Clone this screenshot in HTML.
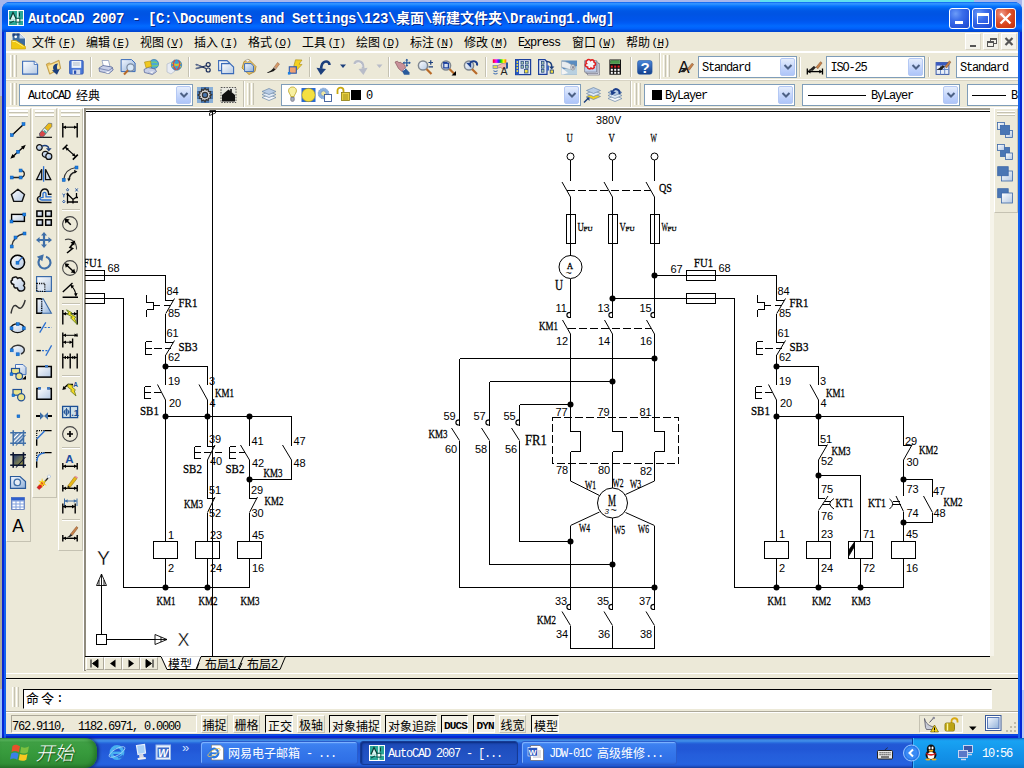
<!DOCTYPE html><html><head><meta charset="utf-8"><title>AutoCAD 2007 - Drawing1.dwg</title><style>
html,body{margin:0;padding:0}
body{width:1024px;height:768px;overflow:hidden;position:relative;background:#a7b6ec;font-family:"Liberation Mono","Noto Sans CJK SC",monospace;font-size:12px;color:#000}
div,svg{position:absolute;box-sizing:border-box}
.t{white-space:pre}
.m .c+.l{margin-left:1.5px;font-size:11px;letter-spacing:-.6px}
.l{letter-spacing:-1.2px}
.c+.l{position:relative;top:-1.5px}
.l:has(+.c){position:relative;top:-1.5px}
.lt{letter-spacing:-.4px}
.du{letter-spacing:-.85px;font-weight:bold}
.c{font-family:"Noto Sans CJK SC","WenQuanYi Zen Hei",sans-serif}
svg text.s{font-family:"Liberation Serif",serif;stroke:#000;stroke-width:.3px}
svg text.n{font-family:"Liberation Sans",sans-serif}
.cb{background:#fff;border:1px solid #7f9db9}
.dd{background:linear-gradient(#e6eefc,#c1d3fb 60%,#aec5f8);border:1px solid #b4c8f4;border-radius:2px}
.grip{border-left:1px solid #fff;border-right:1px solid #c5c2b2;width:3px;background:#ece9d8;box-shadow:1px 0 0 #ece9d8}
.sb{border:1px solid;border-color:#404040 #fff #fff #404040}
</style></head><body><div style="left:760px;top:0px;width:214px;height:2px;background:#5fe0f0"></div><div style="left:0px;top:690px;width:2px;height:48px;background:#9cc0f4"></div><div style="left:0px;top:96px;width:2px;height:593px;background:#aca899"></div><div style="left:1022px;top:0px;width:2px;height:690px;background:#e4e6f6"></div><div style="left:1022px;top:690px;width:2px;height:48px;background:#b4c8f8"></div><div style="left:2px;top:2px;width:1020px;height:736px;background:#0a49e0;border-radius:8px 8px 0 0"></div><div style="left:2px;top:736px;width:1020px;height:2px;background:#0526d6"></div><div style="left:2px;top:2px;width:1020px;height:30px;background:linear-gradient(#0058ee 0%,#3593ff 4%,#288eff 8%,#127dff 12%,#036ffc 16%,#0262ee 22%,#0057e5 30%,#0054e3 40%,#0055eb 60%,#005bf5 70%,#026afe 80%,#0061fc 88%,#0055ea 93%,#0048d5 96%,#0144d0 100%);border-radius:8px 8px 0 0"></div><div style="left:2px;top:32px;width:2px;height:706px;background:#0526d6"></div><div style="left:4px;top:32px;width:2px;height:706px;background:#1462ee"></div><div style="left:1018px;top:32px;width:2px;height:706px;background:#1462ee"></div><div style="left:1020px;top:32px;width:2px;height:706px;background:#0526d6"></div><div style="left:6px;top:32px;width:1012px;height:702px;background:#ece9d8"></div><div class="t" style="left:28px;top:10px;font-size:14px;line-height:14px;font-weight:bold;color:#fff;text-shadow:1px 1px 0 #0a2a8a"><span class="lt">AutoCAD 2007 - [C:\Documents and Settings\123\</span><span class="c">桌面</span><span class="lt">\</span><span class="c">新建文件夹</span><span class="lt">\Drawing1.dwg]</span></div><div style="left:949px;top:8px;width:21px;height:21px;background:radial-gradient(circle at 30% 25%,#6c9cf8 0%,#3c6eea 35%,#2a5ae0 65%,#1c46c8 100%);border:1px solid #fff;border-radius:3px"></div><div style="left:955px;top:21px;width:8px;height:3px;background:#fff"></div><div style="left:972px;top:8px;width:21px;height:21px;background:radial-gradient(circle at 30% 25%,#6c9cf8 0%,#3c6eea 35%,#2a5ae0 65%,#1c46c8 100%);border:1px solid #fff;border-radius:3px"></div><div style="left:977px;top:13px;width:12px;height:11px;border:1px solid #fff;border-top:3px solid #fff"></div><div style="left:995px;top:8px;width:21px;height:21px;background:radial-gradient(circle at 30% 25%,#f0a090 0%,#e06040 30%,#d8441c 60%,#c03010 100%);border:1px solid #fff;border-radius:3px"></div><svg style="left:995px;top:8px" width="21" height="21" viewBox="0 0 21 21" ><path d="M5.5 5.5L15.5 15.5M15.5 5.5L5.5 15.5" stroke="#fff" stroke-width="2.4" stroke-linecap="butt"/></svg><div style="left:6px;top:51px;width:1012px;height:2px;background:#fff"></div><div class="t m" style="left:32px;top:36px;font-size:12px;line-height:12px;"><span class="c">文件</span><span class="l">(F)</span></div><div style="left:63px;top:47px;width:6px;height:1px;background:#000"></div><div class="t m" style="left:86px;top:36px;font-size:12px;line-height:12px;"><span class="c">编辑</span><span class="l">(E)</span></div><div style="left:117px;top:47px;width:6px;height:1px;background:#000"></div><div class="t m" style="left:140px;top:36px;font-size:12px;line-height:12px;"><span class="c">视图</span><span class="l">(V)</span></div><div style="left:171px;top:47px;width:6px;height:1px;background:#000"></div><div class="t m" style="left:194px;top:36px;font-size:12px;line-height:12px;"><span class="c">插入</span><span class="l">(I)</span></div><div style="left:225px;top:47px;width:6px;height:1px;background:#000"></div><div class="t m" style="left:248px;top:36px;font-size:12px;line-height:12px;"><span class="c">格式</span><span class="l">(O)</span></div><div style="left:279px;top:47px;width:6px;height:1px;background:#000"></div><div class="t m" style="left:302px;top:36px;font-size:12px;line-height:12px;"><span class="c">工具</span><span class="l">(T)</span></div><div style="left:333px;top:47px;width:6px;height:1px;background:#000"></div><div class="t m" style="left:356px;top:36px;font-size:12px;line-height:12px;"><span class="c">绘图</span><span class="l">(D)</span></div><div style="left:387px;top:47px;width:6px;height:1px;background:#000"></div><div class="t m" style="left:410px;top:36px;font-size:12px;line-height:12px;"><span class="c">标注</span><span class="l">(N)</span></div><div style="left:441px;top:47px;width:6px;height:1px;background:#000"></div><div class="t m" style="left:464px;top:36px;font-size:12px;line-height:12px;"><span class="c">修改</span><span class="l">(M)</span></div><div style="left:495px;top:47px;width:6px;height:1px;background:#000"></div><div class="t m" style="left:518px;top:37px;font-size:12px;line-height:12px;"><span class="l">Express</span></div><div class="t m" style="left:572px;top:36px;font-size:12px;line-height:12px;"><span class="c">窗口</span><span class="l">(W)</span></div><div style="left:603px;top:47px;width:6px;height:1px;background:#000"></div><div class="t m" style="left:626px;top:36px;font-size:12px;line-height:12px;"><span class="c">帮助</span><span class="l">(H)</span></div><div style="left:657px;top:47px;width:6px;height:1px;background:#000"></div><div style="left:524px;top:47px;width:6px;height:1px;background:#000"></div><div style="left:965px;top:33px;width:16px;height:17px;background:#f3f2ea;border:1px solid;border-color:#fff #d8d4c4 #d8d4c4 #fff"></div><div style="left:983px;top:33px;width:16px;height:17px;background:#f3f2ea;border:1px solid;border-color:#fff #d8d4c4 #d8d4c4 #fff"></div><div style="left:1001px;top:33px;width:16px;height:17px;background:#f3f2ea;border:1px solid;border-color:#fff #d8d4c4 #d8d4c4 #fff"></div><div style="left:970px;top:45px;width:6px;height:2px;background:#555"></div><div style="left:990px;top:38px;width:7px;height:6px;border:1px solid #555;border-top-width:2px"></div><div style="left:987px;top:41px;width:7px;height:6px;border:1px solid #555;border-top-width:2px;background:#f3f2ea"></div><svg style="left:1001px;top:33px" width="16" height="17" viewBox="0 0 16 17" ><path d="M4.5 5L11.5 12M11.5 5L4.5 12" stroke="#555" stroke-width="2.2"/></svg><div style="left:6px;top:79px;width:1012px;height:1px;background:#fff"></div><div style="left:6px;top:80px;width:1012px;height:1px;background:#d8d4c4"></div><div style="left:6px;top:107px;width:1012px;height:1px;background:#fff"></div><div class="grip" style="left:10px;top:55px;width:3px;height:22px;"></div><div class="grip" style="left:14px;top:55px;width:3px;height:22px;"></div><div class="grip" style="left:663px;top:55px;width:3px;height:22px;"></div><div class="grip" style="left:667px;top:55px;width:3px;height:22px;"></div><div class="grip" style="left:10px;top:83px;width:3px;height:22px;"></div><div class="grip" style="left:14px;top:83px;width:3px;height:22px;"></div><div class="grip" style="left:247px;top:83px;width:3px;height:22px;"></div><div class="grip" style="left:251px;top:83px;width:3px;height:22px;"></div><div class="grip" style="left:634px;top:83px;width:3px;height:22px;"></div><div class="grip" style="left:638px;top:83px;width:3px;height:22px;"></div><div style="left:90px;top:57px;width:1px;height:20px;background:#c5c2b2"></div><div style="left:91px;top:57px;width:1px;height:20px;background:#fff"></div><div style="left:188px;top:57px;width:1px;height:20px;background:#c5c2b2"></div><div style="left:189px;top:57px;width:1px;height:20px;background:#fff"></div><div style="left:309px;top:57px;width:1px;height:20px;background:#c5c2b2"></div><div style="left:310px;top:57px;width:1px;height:20px;background:#fff"></div><div style="left:388px;top:57px;width:1px;height:20px;background:#c5c2b2"></div><div style="left:389px;top:57px;width:1px;height:20px;background:#fff"></div><div style="left:485px;top:57px;width:1px;height:20px;background:#c5c2b2"></div><div style="left:486px;top:57px;width:1px;height:20px;background:#fff"></div><div style="left:630px;top:57px;width:1px;height:20px;background:#c5c2b2"></div><div style="left:631px;top:57px;width:1px;height:20px;background:#fff"></div><div style="left:659px;top:53px;width:1px;height:26px;background:#c5c2b2"></div><div style="left:660px;top:53px;width:1px;height:26px;background:#fff"></div><div style="left:243px;top:81px;width:1px;height:26px;background:#c5c2b2"></div><div style="left:244px;top:81px;width:1px;height:26px;background:#fff"></div><div style="left:630px;top:81px;width:1px;height:26px;background:#c5c2b2"></div><div style="left:631px;top:81px;width:1px;height:26px;background:#fff"></div><div class="cb" style="left:698px;top:56px;width:99px;height:22px;"></div><div class="dd" style="left:780px;top:58px;width:15px;height:18px;"></div><svg style="left:779.5px;top:58px" width="16" height="18" viewBox="0 0 16 18" ><path d="M4.5 7 l3.5 3.5 l3.5 -3.5" fill="none" stroke="#4d6185" stroke-width="2"/></svg><div class="t" style="left:702px;top:62px;font-size:12px;line-height:12px;"><span class="l">Standard</span></div><div class="cb" style="left:826px;top:56px;width:99px;height:22px;"></div><div class="dd" style="left:908px;top:58px;width:15px;height:18px;"></div><svg style="left:907.5px;top:58px" width="16" height="18" viewBox="0 0 16 18" ><path d="M4.5 7 l3.5 3.5 l3.5 -3.5" fill="none" stroke="#4d6185" stroke-width="2"/></svg><div class="t" style="left:830.5px;top:62px;font-size:12px;line-height:12px;"><span class="l">ISO-25</span></div><div style="left:799px;top:57px;width:1px;height:20px;background:#c5c2b2"></div><div style="left:800px;top:57px;width:1px;height:20px;background:#fff"></div><div style="left:928px;top:57px;width:1px;height:20px;background:#c5c2b2"></div><div style="left:929px;top:57px;width:1px;height:20px;background:#fff"></div><div class="cb" style="left:956px;top:56px;width:62px;height:22px;border-right:0"></div><div class="t" style="left:960px;top:62px;font-size:12px;line-height:12px;"><span class="l">Standard</span></div><div class="cb" style="left:19px;top:84px;width:174px;height:22px;"></div><div class="dd" style="left:176px;top:86px;width:15px;height:18px;"></div><svg style="left:175.5px;top:86px" width="16" height="18" viewBox="0 0 16 18" ><path d="M4.5 7 l3.5 3.5 l3.5 -3.5" fill="none" stroke="#4d6185" stroke-width="2"/></svg><div class="t" style="left:28px;top:89px;font-size:12px;line-height:12px;"><span class="l">AutoCAD </span><span class="c">经典</span></div><div class="cb" style="left:281px;top:84px;width:300px;height:22px;"></div><div class="dd" style="left:564px;top:86px;width:15px;height:18px;"></div><svg style="left:563.5px;top:86px" width="16" height="18" viewBox="0 0 16 18" ><path d="M4.5 7 l3.5 3.5 l3.5 -3.5" fill="none" stroke="#4d6185" stroke-width="2"/></svg><div style="left:351px;top:90px;width:10px;height:10px;background:#000"></div><div class="t" style="left:366px;top:90px;font-size:12px;line-height:12px;"><span class="l">0</span></div><div class="cb" style="left:644px;top:84px;width:151px;height:22px;"></div><div class="dd" style="left:778px;top:86px;width:15px;height:18px;"></div><svg style="left:777.5px;top:86px" width="16" height="18" viewBox="0 0 16 18" ><path d="M4.5 7 l3.5 3.5 l3.5 -3.5" fill="none" stroke="#4d6185" stroke-width="2"/></svg><div style="left:652px;top:90px;width:10px;height:10px;background:#000"></div><div class="t" style="left:665px;top:90px;font-size:12px;line-height:12px;"><span class="l">ByLayer</span></div><div class="cb" style="left:802px;top:84px;width:158px;height:22px;"></div><div class="dd" style="left:943px;top:86px;width:15px;height:18px;"></div><svg style="left:942.5px;top:86px" width="16" height="18" viewBox="0 0 16 18" ><path d="M4.5 7 l3.5 3.5 l3.5 -3.5" fill="none" stroke="#4d6185" stroke-width="2"/></svg><div style="left:808px;top:95px;width:58px;height:1px;background:#000"></div><div class="t" style="left:871px;top:90px;font-size:12px;line-height:12px;"><span class="l">ByLayer</span></div><div class="cb" style="left:967px;top:84px;width:51px;height:22px;border-right:0"></div><div style="left:972px;top:95px;width:34px;height:1px;background:#000"></div><div class="t" style="left:1011px;top:90px;font-size:12px;line-height:12px;"><span class="l">B</span></div><div style="left:6px;top:108px;width:25px;height:434px;border:1px solid;border-color:#fff #c5c2b2 #c5c2b2 #fff"></div><div style="left:9px;top:110px;width:19px;height:3px;border-top:2px solid #fff;border-bottom:1px solid #c5c2b2"></div><div style="left:9px;top:114px;width:19px;height:3px;border-top:2px solid #fff;border-bottom:1px solid #c5c2b2"></div><div style="left:32px;top:108px;width:25px;height:390px;border:1px solid;border-color:#fff #c5c2b2 #c5c2b2 #fff"></div><div style="left:35px;top:110px;width:19px;height:3px;border-top:2px solid #fff;border-bottom:1px solid #c5c2b2"></div><div style="left:35px;top:114px;width:19px;height:3px;border-top:2px solid #fff;border-bottom:1px solid #c5c2b2"></div><div style="left:58px;top:108px;width:25px;height:443px;border:1px solid;border-color:#fff #c5c2b2 #c5c2b2 #fff"></div><div style="left:61px;top:110px;width:19px;height:3px;border-top:2px solid #fff;border-bottom:1px solid #c5c2b2"></div><div style="left:61px;top:114px;width:19px;height:3px;border-top:2px solid #fff;border-bottom:1px solid #c5c2b2"></div><div style="left:62px;top:209px;width:18px;height:2px;border-top:1px solid #c5c2b2;border-bottom:1px solid #fff"></div><div style="left:62px;top:303px;width:18px;height:2px;border-top:1px solid #c5c2b2;border-bottom:1px solid #fff"></div><div style="left:62px;top:375px;width:18px;height:2px;border-top:1px solid #c5c2b2;border-bottom:1px solid #fff"></div><div style="left:62px;top:447px;width:18px;height:2px;border-top:1px solid #c5c2b2;border-bottom:1px solid #fff"></div><div style="left:62px;top:519px;width:18px;height:2px;border-top:1px solid #c5c2b2;border-bottom:1px solid #fff"></div><div style="left:990px;top:108px;width:4px;height:548px;background:#f6f4ea"></div><div style="left:994px;top:108px;width:24px;height:105px;border:1px solid;border-color:#fff #c5c2b2 #c5c2b2 #fff"></div><div style="left:997px;top:111px;width:18px;height:2px;border-top:1px solid #fff;border-bottom:1px solid #c5c2b2"></div><div style="left:997px;top:114px;width:18px;height:2px;border-top:1px solid #fff;border-bottom:1px solid #c5c2b2"></div><div style="left:83px;top:108px;width:907px;height:2px;background:#a19d8f"></div><div style="left:83px;top:108px;width:1px;height:563px;background:#fff"></div><div style="left:84px;top:108px;width:2px;height:563px;background:#8f8b7e"></div><div style="left:86px;top:110px;width:904px;height:546px;background:#fff"></div><div style="left:86px;top:111px;width:904px;height:1px;background:#000"></div><svg style="left:85px;top:110px" width="905" height="546" viewBox="85 110 905 546" ><path d="M570.5 160L570.5 181M612.5 160L612.5 181M654.5 160L654.5 181M570.5 197L570.5 255.5M570.5 278.5L570.5 318M612.5 197L612.5 318M654.5 197L654.5 318M570.5 334L570.5 404.5M612.5 334L612.5 404.5M654.5 334L654.5 404.5M570.5 404.5L570.5 431.5M570.5 431.5L580.5 431.5M580.5 431.5L580.5 451.5M580.5 451.5L570.5 451.5M570.5 451.5L570.5 463M612.5 404.5L612.5 431.5M612.5 431.5L622.5 431.5M622.5 431.5L622.5 451.5M622.5 451.5L612.5 451.5M612.5 451.5L612.5 463M654.5 404.5L654.5 431.5M654.5 431.5L664.5 431.5M664.5 431.5L664.5 451.5M664.5 451.5L654.5 451.5M654.5 451.5L654.5 463M570.5 463L570.5 481M612.5 463L612.5 488M654.5 463L654.5 481M570.5 525.5L570.5 610M612.5 518L612.5 610M654.5 525.5L654.5 610M570.5 625.5L570.5 648.5M612.5 625.5L612.5 648.5M654.5 625.5L654.5 648.5M570.5 648.5L654.5 648.5M459.5 358.5L459.5 425.5M459.5 440.5L459.5 587.5M489.5 381.5L489.5 425.5M489.5 440.5L489.5 564.5M519.5 404.5L519.5 425.5M519.5 440.5L519.5 541.5M459.5 358.5L654.5 358.5M489.5 381.5L612.5 381.5M519.5 404.5L570.5 404.5M459.5 587.5L654.5 587.5M489.5 564.5L612.5 564.5M519.5 541.5L570.5 541.5M654.5 275.5L776.5 275.5M612.5 298.5L734.5 298.5M686.5 275.5L715.5 275.5M686.5 298.5L715.5 298.5M734.5 298.5L734.5 587.5M776.5 275.5L776.5 300.5M776.5 300.5L783.5 300.5M776.5 313.5L776.5 342.5M757.5 295L757.5 302.5M757.5 302.5L764.5 302.5M764.5 302.5L764.5 309.5M764.5 309.5L757.5 309.5M757.5 309.5L757.5 317M776.5 342.5L783.5 342.5M776.5 355L776.5 385M762.5 341.5L756.5 341.5M756.5 341.5L756.5 354.5M756.5 354.5L762.5 354.5M756.5 348.5L762.5 348.5M776.5 366.5L818.5 366.5M818.5 366.5L818.5 385M776.5 400L776.5 416.5M761.5 386.5L755.5 386.5M755.5 386.5L755.5 398.5M755.5 398.5L761.5 398.5M755.5 392.5L761.5 392.5M765 392.5L772 392.5M818.5 400L818.5 416.5M776.5 416.5L903.5 416.5M776.5 416.5L776.5 541.5M818.5 416.5L818.5 445.5M818.5 445.5L826.5 445.5M818.5 460L818.5 475.5M818.5 475.5L860.5 475.5M860.5 475.5L860.5 541.5M818.5 475.5L818.5 498.5M818.5 498.5L825 498.5M818.5 510.5L818.5 541.5M824.5 501.5L830.5 501.5M822 504.5L830 504.5M903.5 416.5L903.5 445.5M903.5 445.5L911.5 445.5M903.5 460L903.5 496M903.5 479.5L932.5 479.5M932.5 479.5L932.5 496.5M932.5 512.5L932.5 522.5M932.5 522.5L903.5 522.5M903.5 511.5L903.5 541.5M892.5 501.5L900 501.5M892.5 504.5L901 504.5M776.5 541.5L776.5 541.5M776.5 558.5L776.5 587.5M818.5 541.5L818.5 541.5M818.5 558.5L818.5 587.5M860.5 541.5L860.5 541.5M860.5 558.5L860.5 587.5M903.5 541.5L903.5 541.5M903.5 558.5L903.5 587.5M734.5 587.5L903.5 587.5M854.5 541.5L854.5 558.5M85 275.5L165.5 275.5M85 298.5L123.5 298.5M75.5 275.5L104.5 275.5M75.5 298.5L104.5 298.5M123.5 298.5L123.5 587.5M165.5 275.5L165.5 300.5M165.5 300.5L172.5 300.5M165.5 313.5L165.5 342.5M146.5 295L146.5 302.5M146.5 302.5L153.5 302.5M153.5 302.5L153.5 309.5M153.5 309.5L146.5 309.5M146.5 309.5L146.5 317M165.5 342.5L172.5 342.5M165.5 355L165.5 385M151.5 341.5L145.5 341.5M145.5 341.5L145.5 354.5M145.5 354.5L151.5 354.5M145.5 348.5L151.5 348.5M165.5 366.5L207.5 366.5M207.5 366.5L207.5 385M165.5 400L165.5 416.5M150.5 386.5L144.5 386.5M144.5 386.5L144.5 398.5M144.5 398.5L150.5 398.5M144.5 392.5L150.5 392.5M154 392.5L161 392.5M207.5 400L207.5 416.5M165.5 416.5L291.5 416.5M165.5 416.5L165.5 541.5M207.5 416.5L207.5 446.5M207.5 446.5L214.5 446.5M207.5 460L207.5 498.5M200.5 446.5L194.5 446.5M194.5 446.5L194.5 458.5M194.5 458.5L200.5 458.5M194.5 452.5L200.5 452.5M249.5 416.5L249.5 445.5M249.5 460L249.5 498.5M235.5 446.5L229.5 446.5M229.5 446.5L229.5 458.5M229.5 458.5L235.5 458.5M229.5 452.5L235.5 452.5M239 452.5L245 452.5M291.5 416.5L291.5 445.5M291.5 460L291.5 479.5M291.5 479.5L249.5 479.5M207.5 498.5L214.5 498.5M207.5 512.5L207.5 541.5M249.5 498.5L256.5 498.5M249.5 512.5L249.5 541.5M165.5 558.5L165.5 587.5M207.5 558.5L207.5 587.5M249.5 558.5L249.5 587.5M123.5 587.5L249.5 587.5M212.5 111L212.5 656M101.5 634.5L101.5 585M106.5 639.5L155 639.5" stroke="#000" fill="none" shape-rendering="crispEdges"/><path d="M562 182L570.5 197M604 182L612.5 197M646 182L654.5 197M562.5 320L570.5 334M604.5 320L612.5 334M646.5 320L654.5 334M570.5 481L599.5 495.5M654.5 481L625.5 494.5M599.5 512L570.5 525.5M625.5 512.5L654.5 525.5M562 611.5L570.5 625.5M604 611.5L612.5 625.5M646 611.5L654.5 625.5M451.5 428L459.5 440.5M481.5 428L489.5 440.5M511.5 428L519.5 440.5M785.5 298.5L776.8 313.5M785.5 340.5L776.8 355M768.5 384.5L776.5 400M810 384.5L818.5 400M827.5 444.5L818.5 460M828 496L818.5 510.5M912.5 444L903.5 460M923.5 496L932.5 512.5M896 496L903.5 511.5M174.5 298.5L165.8 313.5M174.5 340.5L165.8 355M157.5 384.5L165.5 400M199 384.5L207.5 400M215 445L207.5 460M240.5 445L249.5 460M282.5 445L291.5 460M215 497L207.5 512.5M257.5 497L249.5 512.5" stroke="#000" fill="none"/><text class="n" x="596" y="124" font-size="11" textLength="25.2" lengthAdjust="spacingAndGlyphs">380V</text><text class="s" x="566.5" y="142" font-size="13.2" textLength="6.3" lengthAdjust="spacingAndGlyphs">U</text><circle cx="570.5" cy="156.5" r="3.5" fill="none" stroke="#000"/><rect x="566" y="214.5" width="9" height="29" fill="none" stroke="#000" shape-rendering="crispEdges"/><text class="s" x="577.5" y="230.5" font-size="13.2" textLength="6.3" lengthAdjust="spacingAndGlyphs">U</text><text class="s" x="583.5" y="230.5" font-size="7" textLength="9" lengthAdjust="spacingAndGlyphs">FU</text><text class="s" x="608.5" y="142" font-size="13.2" textLength="6.3" lengthAdjust="spacingAndGlyphs">V</text><circle cx="612.5" cy="156.5" r="3.5" fill="none" stroke="#000"/><rect x="608" y="214.5" width="9" height="29" fill="none" stroke="#000" shape-rendering="crispEdges"/><text class="s" x="619.5" y="230.5" font-size="13.2" textLength="6.3" lengthAdjust="spacingAndGlyphs">V</text><text class="s" x="625.5" y="230.5" font-size="7" textLength="9" lengthAdjust="spacingAndGlyphs">FU</text><text class="s" x="650.5" y="142" font-size="13.2" textLength="6.3" lengthAdjust="spacingAndGlyphs">W</text><circle cx="654.5" cy="156.5" r="3.5" fill="none" stroke="#000"/><rect x="650" y="214.5" width="9" height="29" fill="none" stroke="#000" shape-rendering="crispEdges"/><text class="s" x="661.5" y="230.5" font-size="13.2" textLength="6.3" lengthAdjust="spacingAndGlyphs">W</text><text class="s" x="667.5" y="230.5" font-size="7" textLength="9" lengthAdjust="spacingAndGlyphs">FU</text><path d="M567 190.5L651 190.5" stroke="#000" fill="none" stroke-dasharray="8 3" shape-rendering="crispEdges"/><text class="s" x="659" y="192" font-size="13.2" textLength="13" lengthAdjust="spacingAndGlyphs">QS</text><circle cx="570.5" cy="267" r="11.5" fill="none" stroke="#000"/><text class="s" x="567" y="269" font-size="9" textLength="6" lengthAdjust="spacingAndGlyphs">A</text><text class="n" x="565.5" y="276" font-size="9" textLength="6.3" lengthAdjust="spacingAndGlyphs">~</text><text class="s" x="555" y="290" font-size="15" textLength="8" lengthAdjust="spacingAndGlyphs">U</text><circle cx="654.5" cy="275.5" r="3" fill="#000"/><circle cx="612.5" cy="298.5" r="3" fill="#000"/><path d="M570.5 312.3a3.6 2.6 0 1 0 0 5.2" fill="none" stroke="#000" stroke-width="1.2"/><text class="n" x="555.5" y="311.8" font-size="11">11</text><text class="n" x="556" y="344.8" font-size="11">12</text><path d="M612.5 312.3a3.6 2.6 0 1 0 0 5.2" fill="none" stroke="#000" stroke-width="1.2"/><text class="n" x="597.5" y="311.8" font-size="11">13</text><text class="n" x="598" y="344.8" font-size="11">14</text><path d="M654.5 312.3a3.6 2.6 0 1 0 0 5.2" fill="none" stroke="#000" stroke-width="1.2"/><text class="n" x="639.5" y="311.8" font-size="11">15</text><text class="n" x="640" y="344.8" font-size="11">16</text><path d="M567.5 328.5L651 328.5" stroke="#000" fill="none" stroke-dasharray="8 3" shape-rendering="crispEdges"/><text class="s" x="539" y="330" font-size="13.2" textLength="18.9" lengthAdjust="spacingAndGlyphs">KM1</text><circle cx="654.5" cy="358.5" r="3" fill="#000"/><circle cx="612.5" cy="381.5" r="3" fill="#000"/><circle cx="570.5" cy="404.5" r="3" fill="#000"/><rect x="552.5" y="417.5" width="126" height="46" fill="none" stroke="#000" stroke-dasharray="8 3" shape-rendering="crispEdges"/><text class="s" x="525" y="444.5" font-size="15" textLength="22" lengthAdjust="spacingAndGlyphs">FR1</text><text class="n" x="555.5" y="416" font-size="11">77</text><text class="n" x="597.5" y="416" font-size="11">79</text><text class="n" x="639.5" y="416" font-size="11">81</text><text class="n" x="556" y="473.5" font-size="11">78</text><text class="n" x="598" y="473.5" font-size="11">80</text><text class="n" x="640" y="475" font-size="11">82</text><circle cx="612.5" cy="503" r="15" fill="none" stroke="#000"/><text class="s" x="608" y="505.5" font-size="17" textLength="8" lengthAdjust="spacingAndGlyphs">M</text><text class="n" x="604.5" y="514" font-size="8" font-style="italic">3</text><text class="n" x="610.5" y="514" font-size="11" textLength="6.3" lengthAdjust="spacingAndGlyphs">~</text><text class="s" x="585" y="489" font-size="13.2" textLength="11" lengthAdjust="spacingAndGlyphs">W1</text><text class="s" x="612.5" y="486.5" font-size="13.2" textLength="11" lengthAdjust="spacingAndGlyphs">W2</text><text class="s" x="630" y="488" font-size="13.2" textLength="11" lengthAdjust="spacingAndGlyphs">W3</text><text class="s" x="579" y="531.5" font-size="13.2" textLength="11" lengthAdjust="spacingAndGlyphs">W4</text><text class="s" x="614" y="533.5" font-size="13.2" textLength="11" lengthAdjust="spacingAndGlyphs">W5</text><text class="s" x="638" y="532.5" font-size="13.2" textLength="11" lengthAdjust="spacingAndGlyphs">W6</text><circle cx="570.5" cy="541.5" r="3" fill="#000"/><circle cx="612.5" cy="564.5" r="3" fill="#000"/><circle cx="654.5" cy="587.5" r="3" fill="#000"/><path d="M570.5 604.3a3.6 2.6 0 1 0 0 5.2" fill="none" stroke="#000" stroke-width="1.2"/><text class="n" x="555" y="604.5" font-size="11">33</text><text class="n" x="556" y="637.5" font-size="11">34</text><path d="M612.5 604.3a3.6 2.6 0 1 0 0 5.2" fill="none" stroke="#000" stroke-width="1.2"/><text class="n" x="597" y="604.5" font-size="11">35</text><text class="n" x="598" y="637.5" font-size="11">36</text><path d="M654.5 604.3a3.6 2.6 0 1 0 0 5.2" fill="none" stroke="#000" stroke-width="1.2"/><text class="n" x="639" y="604.5" font-size="11">37</text><text class="n" x="640" y="637.5" font-size="11">38</text><text class="s" x="537" y="623.5" font-size="13.2" textLength="18.9" lengthAdjust="spacingAndGlyphs">KM2</text><path d="M459.5 419.8a3.6 2.6 0 1 0 0 5.2" fill="none" stroke="#000" stroke-width="1.2"/><text class="n" x="443.5" y="420" font-size="11">59</text><text class="n" x="445" y="452.5" font-size="11">60</text><path d="M489.5 419.8a3.6 2.6 0 1 0 0 5.2" fill="none" stroke="#000" stroke-width="1.2"/><text class="n" x="473.5" y="420" font-size="11">57</text><text class="n" x="475" y="452.5" font-size="11">58</text><path d="M519.5 419.8a3.6 2.6 0 1 0 0 5.2" fill="none" stroke="#000" stroke-width="1.2"/><text class="n" x="503.5" y="420" font-size="11">55</text><text class="n" x="505" y="452.5" font-size="11">56</text><text class="s" x="428.5" y="437.5" font-size="13.2" textLength="18.9" lengthAdjust="spacingAndGlyphs">KM3</text><rect x="686.5" y="270.5" width="29" height="10" fill="none" stroke="#000" shape-rendering="crispEdges"/><rect x="686.5" y="293.5" width="29" height="10" fill="none" stroke="#000" shape-rendering="crispEdges"/><text class="n" x="670.5" y="273" font-size="11">67</text><text class="s" x="694" y="267" font-size="13.5" textLength="19" lengthAdjust="spacingAndGlyphs">FU1</text><text class="n" x="718.5" y="271.5" font-size="11">68</text><path d="M765 305.5L781 305.5" stroke="#000" fill="none" stroke-dasharray="6 4" shape-rendering="crispEdges"/><text class="n" x="777.5" y="295" font-size="11">84</text><text class="s" x="789.5" y="307" font-size="13.2" textLength="18.9" lengthAdjust="spacingAndGlyphs">FR1</text><text class="n" x="779" y="317" font-size="11">85</text><path d="M764.5 348.5L781.5 348.5" stroke="#000" fill="none" stroke-dasharray="8 3" shape-rendering="crispEdges"/><text class="n" x="777.5" y="337" font-size="11">61</text><text class="s" x="789.5" y="350.5" font-size="13.2" textLength="18.9" lengthAdjust="spacingAndGlyphs">SB3</text><text class="n" x="779" y="360.5" font-size="11">62</text><circle cx="776.5" cy="366.5" r="3" fill="#000"/><text class="n" x="779" y="384.5" font-size="11">19</text><text class="n" x="780" y="406.5" font-size="11">20</text><text class="s" x="751" y="414.5" font-size="13.2" textLength="18.9" lengthAdjust="spacingAndGlyphs">SB1</text><text class="n" x="820" y="385" font-size="11">3</text><text class="s" x="826" y="396.5" font-size="13.2" textLength="18.9" lengthAdjust="spacingAndGlyphs">KM1</text><text class="n" x="820.5" y="407" font-size="11">4</text><circle cx="776.5" cy="416.5" r="3" fill="#000"/><circle cx="818.5" cy="416.5" r="3" fill="#000"/><text class="n" x="820" y="442.5" font-size="11">51</text><text class="s" x="831.5" y="454.5" font-size="13.2" textLength="18.9" lengthAdjust="spacingAndGlyphs">KM3</text><text class="n" x="821" y="464.5" font-size="11">52</text><circle cx="818.5" cy="475.5" r="3" fill="#000"/><path d="M834 498.5Q825.5 503.7 834 509" fill="none" stroke="#000"/><text class="n" x="821" y="493" font-size="11">75</text><text class="s" x="835.5" y="507" font-size="13.2" textLength="18" lengthAdjust="spacingAndGlyphs">KT1</text><text class="n" x="821" y="520" font-size="11">76</text><text class="n" x="905" y="444.5" font-size="11">29</text><text class="s" x="919" y="453.5" font-size="13.2" textLength="18.9" lengthAdjust="spacingAndGlyphs">KM2</text><text class="n" x="906.5" y="466" font-size="11">30</text><circle cx="903.5" cy="479.5" r="3" fill="#000"/><circle cx="903.5" cy="522.5" r="3" fill="#000"/><text class="n" x="933" y="495" font-size="11">47</text><text class="s" x="943.5" y="505.5" font-size="13.2" textLength="18.9" lengthAdjust="spacingAndGlyphs">KM2</text><text class="n" x="933.5" y="517" font-size="11">48</text><path d="M889.5 499Q896 503.7 889.5 509" fill="none" stroke="#000"/><text class="n" x="906.5" y="493" font-size="11">73</text><text class="s" x="868" y="507" font-size="13.2" textLength="18" lengthAdjust="spacingAndGlyphs">KT1</text><text class="n" x="906.5" y="516.5" font-size="11">74</text><rect x="764.5" y="541.5" width="24" height="17" fill="none" stroke="#000" shape-rendering="crispEdges"/><text class="n" x="779" y="538" font-size="11">1</text><text class="n" x="779" y="571.5" font-size="11">2</text><text class="s" x="767.5" y="604.5" font-size="13.2" textLength="18.9" lengthAdjust="spacingAndGlyphs">KM1</text><rect x="806.5" y="541.5" width="24" height="17" fill="none" stroke="#000" shape-rendering="crispEdges"/><text class="n" x="821" y="538" font-size="11">23</text><text class="n" x="821" y="571.5" font-size="11">24</text><text class="s" x="812" y="604.5" font-size="13.2" textLength="18.9" lengthAdjust="spacingAndGlyphs">KM2</text><rect x="848.5" y="541.5" width="24" height="17" fill="none" stroke="#000" shape-rendering="crispEdges"/><text class="n" x="863" y="538" font-size="11">71</text><text class="n" x="863" y="571.5" font-size="11">72</text><text class="s" x="851.5" y="604.5" font-size="13.2" textLength="18.9" lengthAdjust="spacingAndGlyphs">KM3</text><rect x="891.5" y="541.5" width="24" height="17" fill="none" stroke="#000" shape-rendering="crispEdges"/><text class="n" x="906" y="538" font-size="11">45</text><text class="n" x="906" y="571.5" font-size="11">16</text><text class="s" x="812" y="604.5" font-size="13.2" textLength="0" lengthAdjust="spacingAndGlyphs"></text><circle cx="776.5" cy="587.5" r="3" fill="#000"/><circle cx="818.5" cy="587.5" r="3" fill="#000"/><circle cx="860.5" cy="587.5" r="3" fill="#000"/><path d="M848.5 556.5L848.5 550.5L854.5 542L854.5 546.5Z" fill="#000" stroke="#000" stroke-width=".8"/><rect x="75.5" y="270.5" width="29" height="10" fill="none" stroke="#000" shape-rendering="crispEdges"/><rect x="75.5" y="293.5" width="29" height="10" fill="none" stroke="#000" shape-rendering="crispEdges"/><text class="n" x="59.5" y="273" font-size="11">67</text><text class="s" x="83" y="267" font-size="13.5" textLength="19" lengthAdjust="spacingAndGlyphs">FU1</text><text class="n" x="107.5" y="271.5" font-size="11">68</text><path d="M154 305.5L170 305.5" stroke="#000" fill="none" stroke-dasharray="6 4" shape-rendering="crispEdges"/><text class="n" x="166.5" y="295" font-size="11">84</text><text class="s" x="178.5" y="307" font-size="13.2" textLength="18.9" lengthAdjust="spacingAndGlyphs">FR1</text><text class="n" x="168" y="317" font-size="11">85</text><path d="M153.5 348.5L170.5 348.5" stroke="#000" fill="none" stroke-dasharray="8 3" shape-rendering="crispEdges"/><text class="n" x="166.5" y="337" font-size="11">61</text><text class="s" x="178.5" y="350.5" font-size="13.2" textLength="18.9" lengthAdjust="spacingAndGlyphs">SB3</text><text class="n" x="168" y="360.5" font-size="11">62</text><circle cx="165.5" cy="366.5" r="3" fill="#000"/><text class="n" x="168" y="384.5" font-size="11">19</text><text class="n" x="169" y="406.5" font-size="11">20</text><text class="s" x="140" y="414.5" font-size="13.2" textLength="18.9" lengthAdjust="spacingAndGlyphs">SB1</text><text class="n" x="209" y="385" font-size="11">3</text><text class="s" x="215" y="396.5" font-size="13.2" textLength="18.9" lengthAdjust="spacingAndGlyphs">KM1</text><text class="n" x="209.5" y="407" font-size="11">4</text><circle cx="165.5" cy="416.5" r="3" fill="#000"/><circle cx="207.5" cy="416.5" r="3" fill="#000"/><circle cx="249.5" cy="416.5" r="3" fill="#000"/><path d="M203.5 452.5L223 452.5" stroke="#000" fill="none" stroke-dasharray="7 4" shape-rendering="crispEdges"/><text class="n" x="209" y="442.5" font-size="11">39</text><text class="n" x="210" y="464.5" font-size="11">40</text><text class="s" x="183" y="472.5" font-size="13.2" textLength="18.9" lengthAdjust="spacingAndGlyphs">SB2</text><text class="n" x="251.5" y="444.5" font-size="11">41</text><text class="n" x="252" y="466.5" font-size="11">42</text><text class="s" x="225.5" y="472.5" font-size="13.2" textLength="18.9" lengthAdjust="spacingAndGlyphs">SB2</text><circle cx="249.5" cy="479.5" r="3" fill="#000"/><text class="n" x="293.5" y="444.5" font-size="11">47</text><text class="n" x="293.5" y="466.5" font-size="11">48</text><text class="s" x="263.5" y="476.5" font-size="13.2" textLength="18.9" lengthAdjust="spacingAndGlyphs">KM3</text><text class="n" x="209" y="493.5" font-size="11">51</text><text class="s" x="184" y="507.5" font-size="13.2" textLength="18.9" lengthAdjust="spacingAndGlyphs">KM3</text><text class="n" x="209" y="516.5" font-size="11">52</text><text class="n" x="251" y="493.5" font-size="11">29</text><text class="s" x="264.5" y="505" font-size="13.2" textLength="18.9" lengthAdjust="spacingAndGlyphs">KM2</text><text class="n" x="251.5" y="516.5" font-size="11">30</text><rect x="153.5" y="541.5" width="24" height="17" fill="none" stroke="#000" shape-rendering="crispEdges"/><text class="n" x="168" y="538.5" font-size="11">1</text><text class="n" x="168" y="571.5" font-size="11">2</text><text class="s" x="156.5" y="604.5" font-size="13.2" textLength="18.9" lengthAdjust="spacingAndGlyphs">KM1</text><rect x="195.5" y="541.5" width="24" height="17" fill="none" stroke="#000" shape-rendering="crispEdges"/><text class="n" x="210" y="538.5" font-size="11">23</text><text class="n" x="210" y="571.5" font-size="11">24</text><text class="s" x="198.5" y="604.5" font-size="13.2" textLength="18.9" lengthAdjust="spacingAndGlyphs">KM2</text><rect x="237.5" y="541.5" width="24" height="17" fill="none" stroke="#000" shape-rendering="crispEdges"/><text class="n" x="252" y="538.5" font-size="11">45</text><text class="n" x="252" y="571.5" font-size="11">16</text><text class="s" x="240.5" y="604.5" font-size="13.2" textLength="18.9" lengthAdjust="spacingAndGlyphs">KM3</text><circle cx="165.5" cy="587.5" r="3" fill="#000"/><circle cx="207.5" cy="587.5" r="3" fill="#000"/><path d="M209.5 110.5h6v2.5l-6 2.5v-2.5l6 -2.5" fill="none" stroke="#000" stroke-width=".8"/><rect x="96.5" y="634.5" width="10" height="10" fill="none" stroke="#000" shape-rendering="crispEdges"/><path d="M101.5 574L96.5 585.5H106.5ZM101.5 574V585.5M99 580V585.5M104 580V585.5" fill="#fff" stroke="#000" stroke-width=".9"/><path d="M167 639.5L155 634.5V644.5ZM167 639.5H155M161 637V642" fill="#fff" stroke="#000" stroke-width=".9"/><text class="n" x="97" y="565" font-size="20" textLength="13" lengthAdjust="spacingAndGlyphs" stroke="#fff" stroke-width=".35">Y</text><text class="n" x="177.5" y="646" font-size="19" textLength="12" lengthAdjust="spacingAndGlyphs" stroke="#fff" stroke-width=".35">X</text></svg><div style="left:85px;top:656px;width:905px;height:1px;background:#000"></div><div style="left:85px;top:657px;width:73px;height:13px;background:#ece9d8"></div><div style="left:86px;top:657px;width:18px;height:13px;border:1px solid;border-color:#fff #aca899 #aca899 #fff"></div><div style="left:104px;top:657px;width:18px;height:13px;border:1px solid;border-color:#fff #aca899 #aca899 #fff"></div><div style="left:122px;top:657px;width:18px;height:13px;border:1px solid;border-color:#fff #aca899 #aca899 #fff"></div><div style="left:140px;top:657px;width:18px;height:13px;border:1px solid;border-color:#fff #aca899 #aca899 #fff"></div><svg style="left:86px;top:657px" width="18" height="13" viewBox="0 0 18 13" ><path d="M5 2.5v8M12 2.5v8l-5.5-4z" fill="#000" stroke="#000" stroke-width="1"/></svg><svg style="left:104px;top:657px" width="18" height="13" viewBox="0 0 18 13" ><path d="M11.5 2.5v8l-5.5-4z" fill="#000"/></svg><svg style="left:122px;top:657px" width="18" height="13" viewBox="0 0 18 13" ><path d="M6.5 2.5v8l5.5-4z" fill="#000"/></svg><svg style="left:140px;top:657px" width="18" height="13" viewBox="0 0 18 13" ><path d="M13 2.5v8M6 2.5v8l5.5-4z" fill="#000" stroke="#000" stroke-width="1"/></svg><svg style="left:158px;top:655px" width="140" height="16" viewBox="0 0 140 16" ><path d="M0 1.5H3L9 14.5H38L43 1.5" fill="#fff" stroke="#000"/><path d="M41 8L38.5 14.5H80L85.5 1.5" fill="#ece9d8" stroke="#000"/><path d="M84 8L81 14.5H122L127.5 1.5" fill="#ece9d8" stroke="#000"/><path d="M3 1H43" stroke="#fff" stroke-width="1.6"/></svg><div class="t" style="left:168px;top:658px;font-size:12px;line-height:12px;"><span class="c">模型</span></div><div class="t" style="left:205px;top:658px;font-size:12px;line-height:12px;"><span class="c">布局</span><span class="l">1</span></div><div class="t" style="left:247px;top:658px;font-size:12px;line-height:12px;"><span class="c">布局</span><span class="l">2</span></div><div style="left:6px;top:673px;width:1012px;height:1px;background:#fff"></div><div style="left:6px;top:679px;width:1012px;height:1px;background:#f6f4ea"></div><div style="left:6px;top:678px;width:1012px;height:1px;background:#000"></div><div class="grip" style="left:12px;top:687px;width:3px;height:20px;"></div><div class="grip" style="left:16px;top:687px;width:3px;height:20px;"></div><div style="left:23px;top:689px;width:969px;height:20px;background:#fff;border:1px solid;border-color:#000 #fff #fff #000"></div><div class="t" style="left:26px;top:691px;font-size:13px;line-height:13px;letter-spacing:2px"><span class="c">命令</span><span class="l">:</span></div><div style="left:6px;top:711px;width:1012px;height:1px;background:#aca899"></div><div style="left:6px;top:712px;width:1012px;height:1px;background:#fff"></div><div style="left:11px;top:715px;width:186px;height:18px;border:1px solid;border-color:#aca899 #fff #fff #aca899"></div><div class="t" style="left:12px;top:721px;font-size:12px;line-height:12px;"><span class="l">762.9110,  1182.6971, 0.0000</span></div><div style="left:201px;top:715px;width:27px;height:18px;border:1px solid;border-color:#fff #c5c2b2 #c5c2b2 #fff"></div><div class="t" style="left:202.5px;top:719px;font-size:12px;line-height:12px;"><span class="c">捕捉</span></div><div style="left:233px;top:715px;width:27px;height:18px;border:1px solid;border-color:#fff #c5c2b2 #c5c2b2 #fff"></div><div class="t" style="left:234.5px;top:719px;font-size:12px;line-height:12px;"><span class="c">栅格</span></div><div style="left:265px;top:715px;width:28px;height:18px;border:1px solid;border-color:#000 #fff #fff #000;background:#f4f2e8"></div><div class="t" style="left:268px;top:720px;font-size:12px;line-height:12px;"><span class="c">正交</span></div><div style="left:297px;top:715px;width:28px;height:18px;border:1px solid;border-color:#fff #c5c2b2 #c5c2b2 #fff"></div><div class="t" style="left:299px;top:719px;font-size:12px;line-height:12px;"><span class="c">极轴</span></div><div style="left:329px;top:715px;width:52px;height:18px;border:1px solid;border-color:#000 #fff #fff #000;background:#f4f2e8"></div><div class="t" style="left:332px;top:720px;font-size:12px;line-height:12px;"><span class="c">对象捕捉</span></div><div style="left:385px;top:715px;width:52px;height:18px;border:1px solid;border-color:#000 #fff #fff #000;background:#f4f2e8"></div><div class="t" style="left:388px;top:720px;font-size:12px;line-height:12px;"><span class="c">对象追踪</span></div><div style="left:441px;top:715px;width:27px;height:18px;border:1px solid;border-color:#000 #fff #fff #000;background:#f4f2e8"></div><div class="t" style="left:444px;top:721px;font-size:11px;line-height:11px;"><span class="du">DUCS</span></div><div style="left:473px;top:715px;width:22px;height:18px;border:1px solid;border-color:#000 #fff #fff #000;background:#f4f2e8"></div><div class="t" style="left:476.375px;top:721px;font-size:11px;line-height:11px;"><span class="du">DYN</span></div><div style="left:499px;top:715px;width:27px;height:18px;border:1px solid;border-color:#fff #c5c2b2 #c5c2b2 #fff"></div><div class="t" style="left:500.5px;top:719px;font-size:12px;line-height:12px;"><span class="c">线宽</span></div><div style="left:531px;top:715px;width:28px;height:18px;border:1px solid;border-color:#000 #fff #fff #000;background:#f4f2e8"></div><div class="t" style="left:534px;top:720px;font-size:12px;line-height:12px;"><span class="c">模型</span></div><div style="left:919px;top:715px;width:44px;height:18px;border:1px solid;border-color:#c5c2b2 #fff #fff #c5c2b2"></div><div style="left:0px;top:738px;width:1024px;height:30px;background:linear-gradient(#1f2f86 0,#3165c4 3%,#3682e5 6%,#4490e6 10%,#3883e5 12%,#2b71e0 15%,#2663da 18%,#235bd6 20%,#2258d5 23%,#2157d6 38%,#245ddb 54%,#2562df 86%,#245fdc 89%,#2158d4 92%,#1d4ec0 95%,#1941a5 98%)"></div><div style="left:0px;top:738px;width:97px;height:30px;background:linear-gradient(#388e3c 0,#5bb85f 6%,#3f9f44 14%,#379a3c 50%,#318f36 85%,#2a7a2e 100%);border-radius:0 12px 12px 0;box-shadow:2px 0 3px rgba(0,0,40,.5), inset -3px 0 4px rgba(0,60,0,.35)"></div><div class="t" style="left:37px;top:741px;font-size:19px;line-height:19px;color:#fff;font-weight:300;text-shadow:1px 1px 1px #1a4a1a;transform:skewX(-14deg);line-height:22px"><span class="c">开始</span></div><div style="left:200px;top:741px;width:158px;height:24px;background:linear-gradient(#5a98f8 0,#3c80f0 12%,#3476ea 50%,#2f6fe6 90%,#2a62d4);border:1px solid #2a5ccc;border-radius:3px;box-shadow:inset 1px 1px 0 #7ab0ff"></div><div class="t" style="left:228px;top:747px;font-size:12px;line-height:12px;color:#fff"><span class="c">网易电子邮箱</span><span class="l"> - ...</span></div><div style="left:360px;top:741px;width:158px;height:24px;background:linear-gradient(#1c48b4,#2050c0 40%,#2456c8);border:1px solid #153a94;border-radius:3px;box-shadow:inset 1px 1px 2px #0a2a7a"></div><div class="t" style="left:388px;top:748px;font-size:12px;line-height:12px;color:#fff"><span class="l">AutoCAD 2007 - [...</span></div><div style="left:521px;top:741px;width:156px;height:24px;background:linear-gradient(#5a98f8 0,#3c80f0 12%,#3476ea 50%,#2f6fe6 90%,#2a62d4);border:1px solid #2a5ccc;border-radius:3px;box-shadow:inset 1px 1px 0 #7ab0ff"></div><div class="t" style="left:549px;top:747px;font-size:12px;line-height:12px;color:#fff"><span class="l">JDW-01C </span><span class="c">高级维修</span><span class="l">...</span></div><div style="left:912px;top:738px;width:112px;height:30px;background:linear-gradient(#0c5fb8 0,#1a9aee 6%,#18a2f2 12%,#1394ea 50%,#108ae2 85%,#0d78cc 100%);border-left:1px solid #0a3f9a;box-shadow:inset 1px 0 0 #3ab4ff"></div><div class="t" style="left:982px;top:748px;font-size:12px;line-height:12px;color:#fff"><span class="l">10:56</span></div><div class="t" style="left:182px;top:741px;font-size:13px;line-height:13px;color:#cfe0ff;font-family:Liberation Sans"><span class="l">»</span></div><svg style="left:0;top:0;pointer-events:none" width="1024" height="768" viewBox="0 0 1024 768"><defs>
<linearGradient id="g1" x1="0" y1="0" x2="1" y2="1"><stop offset="0" stop-color="#fff"/><stop offset="1" stop-color="#b4c8e2"/></linearGradient>
<linearGradient id="g2" x1="0" y1="0" x2="1" y2="1"><stop offset="0" stop-color="#223a78"/><stop offset="1" stop-color="#a8a040"/></linearGradient>
<linearGradient id="g3" x1="0" y1="0" x2="0" y2="1"><stop offset="0" stop-color="#4a86d8"/><stop offset="1" stop-color="#123f8c"/></linearGradient>
<linearGradient id="g4" x1="0" y1="0" x2="1" y2="1"><stop offset="0" stop-color="#f4f8ff"/><stop offset="1" stop-color="#8fb0d8"/></linearGradient>
<linearGradient id="rb" x1="0" y1="0" x2="1" y2="0"><stop offset="0" stop-color="#f00"/><stop offset=".25" stop-color="#f0f"/><stop offset=".45" stop-color="#22f"/><stop offset=".6" stop-color="#0d0"/><stop offset=".8" stop-color="#ff0"/><stop offset="1" stop-color="#f60"/></linearGradient>
<pattern id="hat" width="3" height="3" patternUnits="userSpaceOnUse" patternTransform="rotate(45)"><rect width="3" height="3" fill="#fff"/><rect width="1.5" height="3" fill="#3f6fa8"/></pattern>
</defs><g transform="translate(10,122)"><path d="M2 13.2L13.7 2.2" stroke="#000" stroke-width="1.4"/><rect x="0.3" y="11.7" width="3" height="3" fill="#1b7fe3" stroke="#0b57b0" stroke-width=".5"/><rect x="12" y="0.6" width="3" height="3" fill="#1b7fe3" stroke="#0b57b0" stroke-width=".5"/></g><g transform="translate(10,144)"><path d="M2 13.3L14 2.4" stroke="#000" stroke-width="1.4"/><path d="M.3 14.8L5.2 12.9L2.5 10zM15.8 .8L10.9 2.8L13.6 5.6z" fill="#000"/><rect x="6.6" y="6.3" width="3" height="3" fill="#1b7fe3" stroke="#0b57b0" stroke-width=".5"/></g><g transform="translate(10,166)"><path d="M1.5 11.5H10.5A4.6 3.6 0 0 0 10.5 4.4" fill="none" stroke="#222" stroke-width="1.3"/><rect x="0.2" y="10" width="3" height="3" fill="#1b7fe3" stroke="#0b57b0" stroke-width=".5"/><rect x="9.1" y="10" width="3" height="3" fill="#1b7fe3" stroke="#0b57b0" stroke-width=".5"/><rect x="9.1" y="3" width="3" height="3" fill="#1b7fe3" stroke="#0b57b0" stroke-width=".5"/></g><g transform="translate(10,188)"><path d="M7.9 1.2L14.5 6.5L12 13.4H3.8L1.4 6.5Z" fill="url(#g1)" stroke="#111" stroke-width="1.4" stroke-linejoin="round"/></g><g transform="translate(10,210)"><rect x="1.6" y="4.4" width="12.8" height="7" fill="url(#g1)" stroke="#000" stroke-width="1.4"/><rect x="12.8" y="3" width="3" height="3" fill="#1b7fe3" stroke="#0b57b0" stroke-width=".5"/><rect x="0" y="10" width="3" height="3" fill="#1b7fe3" stroke="#0b57b0" stroke-width=".5"/></g><g transform="translate(10,232)"><path d="M1.6 14.5C2.5 8 7 3 14.5 1.5" fill="none" stroke="#333" stroke-width="1.3"/><rect x="13" y="0" width="3" height="3" fill="#1b7fe3" stroke="#0b57b0" stroke-width=".5"/><rect x="4" y="4" width="3" height="3" fill="#1b7fe3" stroke="#0b57b0" stroke-width=".5"/><rect x="0.2" y="13" width="3" height="3" fill="#1b7fe3" stroke="#0b57b0" stroke-width=".5"/></g><g transform="translate(10,254)"><circle cx="7.6" cy="8.3" r="7" fill="url(#g1)" stroke="#000" stroke-width="1.5"/><path d="M7.6 8.6L12.4 3.2" stroke="#2a6fd0" stroke-width="1.2"/><rect x="6" y="7.2" width="3" height="3" fill="#1b7fe3" stroke="#0b57b0" stroke-width=".5"/></g><g transform="translate(10,276)"><path d="M3.5 1.5C5.5 .3 7 1.2 7.5 2.5C9.5 1.2 12.5 2 12.5 4.5C15 5.5 15 8.5 13.5 9.5C16 11.5 14.5 15.2 11.5 15C9 15.5 7.5 14 7.5 12C5 12.5 3 11 3.8 8.5C.5 8 .3 4.5 2.5 4C1.8 2.8 2.5 1.8 3.5 1.5Z" fill="url(#g1)" stroke="#111" stroke-width="1.5" stroke-linejoin="round"/></g><g transform="translate(10,298)"><path d="M1 15.5C2 10 3.5 7 5.5 7.5C7.5 8 9 11.5 11 10C13 8.5 14.5 5 15.2 2" fill="none" stroke="#333" stroke-width="1.4"/></g><g transform="translate(10,320)"><ellipse cx="7.6" cy="8.2" rx="6.8" ry="4.4" fill="url(#g1)" stroke="#111" stroke-width="1.3"/><rect x="0" y="6.8" width="3" height="3" fill="#1b7fe3" stroke="#0b57b0" stroke-width=".5"/><rect x="6.2" y="2.6" width="3" height="3" fill="#1b7fe3" stroke="#0b57b0" stroke-width=".5"/><rect x="12.3" y="6.8" width="3" height="3" fill="#1b7fe3" stroke="#0b57b0" stroke-width=".5"/></g><g transform="translate(10,342)"><ellipse cx="7.8" cy="8.2" rx="6.6" ry="4.6" fill="url(#g1)" stroke="none"/><path d="M1.5 7C2.5 3.5 8 2.2 12 4.4C15.5 6.5 15 10.5 11 12" fill="none" stroke="#333" stroke-width="1.4"/><rect x="0.2" y="6.8" width="3" height="3" fill="#1b7fe3" stroke="#0b57b0" stroke-width=".5"/><rect x="6.2" y="10.8" width="3" height="3" fill="#1b7fe3" stroke="#0b57b0" stroke-width=".5"/></g><g transform="translate(10,364)"><path d="M5.5 .5H13L16 3.5V10.6H5.5Z" fill="url(#g1)" stroke="#3a6ab8" stroke-width=".9"/><rect x="1.5" y="4.5" width="8" height="5.2" fill="#ece48a" stroke="#1f4f94" stroke-width="1.2"/><circle cx="9.2" cy="12.2" r="3.3" fill="#ece48a" stroke="#1f4f94" stroke-width="1.2"/><path d="M16 11.5V15.6H12z" fill="#000"/><rect x="0.1" y="8.8" width="2.8" height="2.8" fill="#1b7fe3" stroke="#0b57b0" stroke-width=".5"/></g><g transform="translate(10,386)"><rect x="3" y="3.5" width="8.5" height="5.7" fill="#ece48a" stroke="#1f4f94" stroke-width="1.2"/><circle cx="11.2" cy="11.2" r="3.6" fill="#ece48a" stroke="#1f4f94" stroke-width="1.2"/><rect x="2" y="8" width="2.7" height="2.7" fill="#1b7fe3" stroke="#0b57b0" stroke-width=".5"/></g><g transform="translate(10,408)"><rect x="7" y="6.9" width="2.8" height="2.8" fill="#1b7fe3" stroke="#0b57b0" stroke-width=".5"/></g><g transform="translate(10,430)"><rect x="3" y="2.7" width="10.5" height="10.5" fill="url(#hat)"/><path d="M3.2 .2V15.7M13.5 .2V15.7M.2 2.8H16M.2 13.2H16" stroke="#3f6fa8" stroke-width="1.5" fill="none"/><path d="M15.5 5L6 15.5" stroke="#3f6fa8" stroke-width="1.1"/></g><g transform="translate(10,452)"><rect x="3" y="2.7" width="10.5" height="10.5" fill="url(#g2)"/><path d="M3.2 .2V15.7M13.5 .2V15.7M.2 2.8H16M.2 13.2H16" stroke="#0c1630" stroke-width="1.6" fill="none"/><path d="M15.5 5L6 15.5" stroke="#0c1630" stroke-width="1.1"/></g><g transform="translate(10,474)"><path d="M.5 2.5H10L15.5 7.5V14.3H.5Z" fill="url(#g4)" stroke="#2a5a9a" stroke-width="1.2"/><circle cx="7.3" cy="8.4" r="3.2" fill="#e8eef6" stroke="#3f6fa8" stroke-width="1.3"/></g><g transform="translate(10,496)"><rect x="1.3" y="1.5" width="13.2" height="12" fill="#7f9fdc" stroke="#4a6ab4" stroke-width=".6"/><rect x="1.3" y="1.5" width="13.2" height="2.6" fill="#2f5fcc"/><path d="M2.5 5.5h3v2h-3zM6.5 5.5h3v2h-3zM10.5 5.5h3v2h-3zM2.5 8.5h3v2h-3zM6.5 8.5h3v2h-3zM10.5 8.5h3v2h-3zM2.5 11.5h3v1.4h-3zM6.5 11.5h3v1.4h-3zM10.5 11.5h3v1.4h-3z" fill="#fff"/></g><g transform="translate(10,518)"><text x="2.2" y="14.2" style="font-family:'Liberation Sans',sans-serif;font-size:17.5px" fill="#000">A</text></g><g transform="translate(36,122)"><path d="M.5 15.3H16" stroke="#000" stroke-width="1.1"/><path d="M4 14.5L3.5 11.5L12.5 1.2L15.8 1.5L15.8 4.5L7 14.8Z" fill="#e8b818" stroke="#4a5a7a" stroke-width=".6"/><path d="M7 14.8L4 14.5L3.5 11.5L6.3 8.4L9.8 11.6Z" fill="#d84848" stroke="#4a5a7a" stroke-width=".6"/><path d="M6.3 8.4L8.5 5.9L12 9L9.8 11.6Z" fill="#e8f4f0" stroke="#4a5a7a" stroke-width=".5"/><path d="M8 8.5l2.4 2.2" stroke="#38a090" stroke-width="1.2"/></g><g transform="translate(36,144)"><circle cx="3.4" cy="3.5" r="2.8" fill="url(#g4)" stroke="#111" stroke-width="1.2"/><circle cx="9.3" cy="10.3" r="3" fill="url(#g4)" stroke="#111" stroke-width="1.2"/><circle cx="12.8" cy="12.4" r="3" fill="url(#g4)" stroke="#111" stroke-width="1.2"/><path d="M6 2.2C9 .5 12.5 1.8 12.8 4.5" fill="none" stroke="#1c3f7c" stroke-width="1.5"/><path d="M10 4.2h5.6l-2.8 3.3z" fill="#1c3f7c"/></g><g transform="translate(36,166)"><path d="M.6 13.7H5.7V3.2Z" fill="url(#g1)" stroke="#111" stroke-width="1.3"/><path d="M14.8 13.7H9.5V3.2Z" fill="url(#g1)" stroke="#111" stroke-width="1.3"/><path d="M7.6 .2V15.7" stroke="#2a6fd0" stroke-width="1.3"/></g><g transform="translate(36,188)"><path d="M15.6 14.5H5C1 14.5 -.2 9.5 4.2 8.2C4 3.5 6 1 8.6 1C11.2 1 12.6 3 12.6 6.2H15.6" fill="none" stroke="#111" stroke-width="1.4"/><path d="M15.6 12H6C3 12 3 9.3 7 9.3V5.8C7 3.8 10 3.8 10 5.8V8.8H15.6" fill="none" stroke="#2a6fd0" stroke-width="1.3"/></g><g transform="translate(36,210)"><rect x="0.9" y="1" width="5.6" height="5.4" fill="url(#g1)" stroke="#000" stroke-width="1.5"/><rect x="0.9" y="9.8" width="5.6" height="5.4" fill="url(#g1)" stroke="#000" stroke-width="1.5"/><rect x="9.7" y="1" width="5.6" height="5.4" fill="url(#g1)" stroke="#000" stroke-width="1.5"/><rect x="9.7" y="9.8" width="5.6" height="5.4" fill="url(#g1)" stroke="#000" stroke-width="1.5"/></g><g transform="translate(36,232)"><path d="M8 0L11 3.6H9.1V6.9H12.4V5L16 8L12.4 11V9.1H9.1V12.4H11L8 16L5 12.4H6.9V9.1H3.6V11L0 8L3.6 5V6.9H6.9V3.6H5Z" fill="#3f6fa8"/></g><g transform="translate(36,254)"><path d="M5 3.6A6 6 0 1 0 10 2.7" fill="none" stroke="#3f6fa8" stroke-width="2.2"/><path d="M.8 2.8L7.8 .3L6.3 7.2Z" fill="#3f6fa8"/></g><g transform="translate(36,276)"><rect x=".6" y=".6" width="14.8" height="14.8" fill="url(#g1)" stroke="#3a6aa8" stroke-width="1.2"/><rect x=".8" y="7.5" width="8" height="7.8" fill="#dfe8f4" stroke="#000" stroke-width="1.3" stroke-dasharray="1.1 1.1"/></g><g transform="translate(36,298)"><path d="M7.2 .8L15.4 15.3H5.7V.8Z" fill="url(#g4)" stroke="#3a6aa8" stroke-width="1.1"/><path d="M5.7 .8H.8V15.3H5.7" fill="url(#g1)" stroke="#000" stroke-width="1.4"/><path d="M5.7 1V15.3" stroke="#000" stroke-width="1.2" stroke-dasharray="1.1 1.1"/></g><g transform="translate(36,320)"><path d="M.4 7.5H5.2" stroke="#000" stroke-width="1.4"/><path d="M3.7 12.7L9.8 2.4" stroke="#2a6fd0" stroke-width="1.3"/><path d="M8.5 7.5H15.6" stroke="#2a6fd0" stroke-width="1.1" stroke-dasharray="2 1.4"/></g><g transform="translate(36,342)"><path d="M.4 8.6H4.8" stroke="#000" stroke-width="1.4"/><path d="M6 8.6H11.8" stroke="#2a6fd0" stroke-width="1.1" stroke-dasharray="2 1.4"/><path d="M9.8 13.8L15.6 3.4" stroke="#2a6fd0" stroke-width="1.3"/></g><g transform="translate(36,364)"><rect x=".9" y="2.5" width="14.4" height="10.6" fill="url(#g1)" stroke="#000" stroke-width="1.5"/><rect x="9" y="1" width="3" height="2.6" fill="#3f78c0"/></g><g transform="translate(36,386)"><path d="M4.5 2.5H.9V13.3H15.3V2.5H11.5" fill="url(#g1)" stroke="#000" stroke-width="1.5"/><rect x="2" y="1" width="3" height="2.6" fill="#3f78c0"/><rect x="11" y="1" width="3" height="2.6" fill="#3f78c0"/></g><g transform="translate(36,408)"><path d="M0 8H4.5M11.5 8H16" stroke="#000" stroke-width="2"/><path d="M4 4.3L8 8L4 11.7ZM12 4.3L8 8L12 11.7Z" fill="#3f6fa8"/></g><g transform="translate(36,430)"><path d="M8.3 .6H15.6M.7 9.2V15.7" stroke="#000" stroke-width="1.4"/><path d="M.7 .6H8.3M.7 .6V9.2" stroke="#000" stroke-width="1.2" stroke-dasharray="1.1 1.1"/><path d="M.8 8.9L8.6 1" stroke="#2a6fd0" stroke-width="1.4"/></g><g transform="translate(36,452)"><path d="M8.3 .6H15.6M.7 9.2V15.7" stroke="#000" stroke-width="1.4"/><path d="M.7 .6H8.3M.7 .6V9.2" stroke="#000" stroke-width="1.2" stroke-dasharray="1.1 1.1"/><path d="M.8 9.2C1 4 4 1 8.6 .9" fill="none" stroke="#2a6fd0" stroke-width="1.5"/></g><g transform="translate(36,474)"><path d="M1 13.5L6.5 7.5L9 10L3.2 15.5Z" fill="#e02020" stroke="#901010" stroke-width=".5"/><path d="M8 8.5L12 4" stroke="#222" stroke-width="1.3"/><path d="M6 4l1.2 3.2l3.3-.8l-2.2 2.6l2.4 2.4l-3.4-.6l-1 3.2l-1-3.2l-3.3.5l2.5-2.3l-2.3-2.6l3.2.8z" fill="#f8d020" opacity=".95"/><path d="M5 8l2 1l-1 2z" fill="#e02020"/><path d="M13 .5v4M11 2.5h4M11.6 1.1l2.8 2.8M14.4 1.1l-2.8 2.8" stroke="#a8c0e0" stroke-width=".8"/><circle cx="13" cy="2.5" r="1" fill="#fff"/></g><g transform="translate(62,122)"><path d="M.8 1V15.6M15.2 1V15.6" stroke="#000" stroke-width="1.4"/><path d="M1 5.2H15" stroke="#000" stroke-width="1.2"/><path d="M1 5.2l3 -1.8v3.6zM15 5.2l-3 -1.8v3.6z" fill="#000"/></g><g transform="translate(62,144)"><path d="M3.3 3.2L13.6 12.6" stroke="#000" stroke-width="1.2"/><path d="M.6 5.5L5.4 .8M10.8 15.6L15.8 10.6" stroke="#000" stroke-width="1.6"/><path d="M3.3 3.2l3.6 1.2l-2.2 2.4zM13.6 12.6l-3.6-1.2l2.2-2.4z" fill="#000"/></g><g transform="translate(62,166)"><path d="M1.8 13.5C2.5 7 7 2.5 14 1.5" fill="none" stroke="#333" stroke-width="1.2"/><path d="M7 13.5C7.5 9.5 10 6.8 13.5 6" fill="none" stroke="#222" stroke-width="1.6"/><path d="M15.4 5.6l-3.4 -1.8l.6 3.6zM6.8 15.6l-1.6-3.2l3.4.2z" fill="#111"/><rect x="13" y="0" width="3" height="3" fill="#1b7fe3" stroke="#0b57b0" stroke-width=".5"/><rect x="0.2" y="12.5" width="3" height="3" fill="#1b7fe3" stroke="#0b57b0" stroke-width=".5"/></g><g transform="translate(62,188)"><path d="M5.5 5V15.6M5.5 6L11 11.5L14 9.5H16M5 14H16M11 11.5V15.6M14.5 5V9.5" fill="none" stroke="#000" stroke-width="1.3"/><path d="M5.5 4.2l-1.4 2.2h2.8z" fill="#000"/><g fill="none" stroke="#1c4fa0" stroke-width=".9"><path d="M.6 5.6l1.2 1.8l1.2-1.8M1.8 7.4v2"/><path d="M5.6 .4l1.1 1.4l-1.1 1.4l-1.1-1.4z"/><path d="M13.4 .4l2.4 3M15.8 .4l-2.4 3"/><path d="M1.8 12.2l1.1 1.4l-1.1 1.4l-1.1-1.4z"/></g></g><g transform="translate(62,216)"><circle cx="8" cy="8" r="7.4" fill="none" stroke="#444" stroke-width="1.1"/><path d="M8.8 8.8L4 4" stroke="#000" stroke-width="1.5"/><path d="M2.6 2.6l5 .8l-4.2 4.2z" fill="#000"/></g><g transform="translate(62,238)"><path d="M3 1.8C9 -.5 15 4 14.5 11.5" fill="none" stroke="#444" stroke-width="1.1"/><path d="M5 15L10.5 10.5L8 9.5L11.5 5" fill="none" stroke="#000" stroke-width="1.6"/><path d="M13.2 2.6l-1 5l-3.8-3z" fill="#000"/></g><g transform="translate(62,260)"><circle cx="8" cy="8" r="7.4" fill="none" stroke="#444" stroke-width="1.1"/><path d="M4 4.5L12 12" stroke="#000" stroke-width="1.5"/><path d="M2.8 3.3l4.6 .8l-3.6 3.6zM13.3 13.2l-4.6-.8l3.6-3.6z" fill="#000"/></g><g transform="translate(62,282)"><path d="M.6 15.3H16M.8 10L10.5 1" stroke="#000" stroke-width="1.4"/><path d="M9.5 4.2C12 6.5 13.5 10 13.8 13" fill="none" stroke="#000" stroke-width="1.1"/><path d="M8.2 2.8l4 1l-2.6 2.8zM14 15l-2-3.6l3.6-.4z" fill="#000"/></g><g transform="translate(62,309)"><path d="M.8 1V15.6M15.2 1V15.6" stroke="#000" stroke-width="1.4"/><path d="M1 4.8H15" stroke="#000" stroke-width="1.2"/><path d="M1 4.8l3 -1.8v3.6zM15 4.8l-3 -1.8v3.6z" fill="#000"/><path d="M4.5 .8l5.5 3l-1.5 1l5.5 3.5l-1.5 1l2.5 6l-6.5-6.5l1.8-.8l-5.3-3l1.8-1z" fill="#f4e020" stroke="#5a7a20" stroke-width=".8"/></g><g transform="translate(62,332)"><path d="M.8 .5V15.6M10.6 6.5V15.6" stroke="#000" stroke-width="1.4"/><path d="M15 1.5V5" stroke="#000" stroke-width="1"/><path d="M1 3.3H15.5" stroke="#000" stroke-width="1"/><path d="M1 3.3l3 -1.8v3.6zM15.5 3.3l-3 -1.8v3.6z" fill="#000"/><path d="M1 10.2H10.5" stroke="#000" stroke-width="1"/><path d="M1 10.2l3 -1.8v3.6zM10.5 10.2l-3 -1.8v3.6z" fill="#000"/></g><g transform="translate(62,353)"><path d="M.8 .5V15.6M8.2 .5V15.6M15.2 .5V15.6" stroke="#000" stroke-width="1.4"/><path d="M1 4.5H8" stroke="#000" stroke-width="1"/><path d="M1 4.5l3 -1.8v3.6zM8 4.5l-3 -1.8v3.6z" fill="#000"/><path d="M8.4 4.5H15" stroke="#000" stroke-width="1"/><path d="M8.4 4.5l3 -1.8v3.6zM15 4.5l-3 -1.8v3.6z" fill="#000"/></g><g transform="translate(62,382)"><path d="M11 2.5H6L1.5 6.5" fill="none" stroke="#000" stroke-width="1.3"/><path d="M.3 8l1.2-4l2.8 3z" fill="#000"/><path d="M6 2l5 1.5l-1 1.5l3.5 3l-1.2 .8l1.7 5.2l-5.5-5l1.2-1l-4-3z" fill="#f4d820" stroke="#6a7a20" stroke-width=".8"/><text x="11.2" y="5" font-family="Liberation Sans, sans-serif" font-size="6.5" font-weight="bold" fill="#1c4fa0">A</text></g><g transform="translate(62,404)"><rect x=".6" y="2.4" width="15" height="11.2" fill="#cfe0e8" stroke="#1c4f94" stroke-width="1.3"/><path d="M8.3 2.4V13.6" stroke="#1c4f94" stroke-width="1.3"/><circle cx="4.5" cy="8" r="2.3" fill="none" stroke="#1c4f94" stroke-width="1"/><path d="M4.5 4v8M1.5 8h6" stroke="#1c4f94" stroke-width=".9"/><text x="9.2" y="12.4" font-family="Liberation Sans, sans-serif" font-size="9" font-weight="bold" fill="#1c4f94">.1</text></g><g transform="translate(62,426)"><circle cx="8" cy="8" r="7.4" fill="none" stroke="#444" stroke-width="1.1"/><path d="M8 5v6M5 8h6" stroke="#000" stroke-width="1.7"/></g><g transform="translate(62,454)"><path d="M.8 9V15.6M15.2 9V15.6" stroke="#000" stroke-width="1.4"/><path d="M1 12.3H15" stroke="#000" stroke-width="1.4"/><path d="M1 12.3l3 -1.8v3.6zM15 12.3l-3 -1.8v3.6z" fill="#000"/><text x="3.2" y="8.6" font-family="Liberation Sans, sans-serif" font-size="11.5" font-weight="bold" fill="#1c4fa0">A</text></g><g transform="translate(62,476)"><path d="M.8 9V15.6M15.2 9V15.6" stroke="#000" stroke-width="1.4"/><path d="M1 12.3H15" stroke="#000" stroke-width="1.4"/><path d="M1 12.3l3 -1.8v3.6zM15 12.3l-3 -1.8v3.6z" fill="#000"/><path d="M6 9.5L12.5 .8L15 2.6L8.3 11.2L5.6 12.3Z" fill="#e8b818" stroke="#8a6a10" stroke-width=".5"/><path d="M12.5 .8l1-1l2.6 1.8l-1.1 1z" fill="#e88aa0"/><path d="M5.6 12.3l.4-2.8l2.3 1.7z" fill="#222"/></g><g transform="translate(62,498)"><path d="M2.5 .5V8M15 .5V8" stroke="#3f6fa8" stroke-width="1"/><path d="M2.6 3H14.8" stroke="#3f6fa8" stroke-width="1"/><path d="M2.6 3l3 -1.8v3.6zM14.8 3l-3 -1.8v3.6z" fill="#3f6fa8"/><path d="M.8 5.5V15.6M13.2 5.5V15.6" stroke="#000" stroke-width="1.4"/><path d="M1 8.6H13" stroke="#000" stroke-width="1.4"/><path d="M1 8.6l3 -1.8v3.6zM13 8.6l-3 -1.8v3.6z" fill="#000"/></g><g transform="translate(62,526)"><path d="M.8 9V15.6M15.2 9V15.6" stroke="#000" stroke-width="1.4"/><path d="M1 12.3H15" stroke="#000" stroke-width="1.4"/><path d="M1 12.3l3 -1.8v3.6zM15 12.3l-3 -1.8v3.6z" fill="#000"/><path d="M8.5 8L14.5 .5L16 1.8L10.3 9.4Z" fill="#c8824a" stroke="#7a4a28" stroke-width=".5"/><path d="M8.5 8L10.3 9.4L8 11L4.5 11.4L7 10Z" fill="#222"/></g><g transform="translate(997,122)"><rect x="0.5" y="0.5" width="7" height="7" fill="url(#g1)" stroke="#3a66a8" stroke-width=".8"/><rect x="8.5" y="8.5" width="7" height="7" fill="url(#g1)" stroke="#3a66a8" stroke-width=".8"/><rect x="3.5" y="3.5" width="9" height="9" fill="#4a76b4" stroke="#3a66a8" stroke-width=".8"/></g><g transform="translate(997,144)"><rect x="3.5" y="3.5" width="9" height="9" fill="#4a76b4" stroke="#3a66a8" stroke-width=".8"/><rect x="0.5" y="0.5" width="7" height="6" fill="url(#g1)" stroke="#3a66a8" stroke-width=".8"/><rect x="8.5" y="9" width="7" height="6.5" fill="url(#g1)" stroke="#3a66a8" stroke-width=".8"/></g><g transform="translate(997,166)"><rect x="4.5" y="5" width="11" height="10" fill="url(#g1)" stroke="#3a66a8" stroke-width=".8"/><rect x="0.7" y="0.7" width="10.5" height="9" fill="#4a76b4" stroke="#3a66a8" stroke-width=".8"/></g><g transform="translate(997,188)"><rect x="0.7" y="0.7" width="10.5" height="9" fill="#4a76b4" stroke="#3a66a8" stroke-width=".8"/><rect x="4.5" y="5" width="11" height="10" fill="url(#g1)" stroke="#3a66a8" stroke-width=".8"/></g><g transform="translate(22,59.5)"><path d="M.6 1.8H12.2L15.6 5V14.6H.6Z" fill="url(#g1)" stroke="#3a6ab8" stroke-width="1.1"/><path d="M12.2 1.8V5H15.6" fill="#fff" stroke="#3a6ab8" stroke-width=".8"/></g><g transform="translate(45.5,59)"><path d="M.8 5.200L4 3.800L5.200 5L13.500 1.200L15.200 9.500L4.200 15.200Z" fill="#e8c060" stroke="#b08a30" stroke-width=".7"/><path d="M2.500 7L12.800 2.800L14.200 9.300L4.600 14Z" fill="#f8e4a0"/><path d="M12.500 4.500C8.500 4.500 6.500 7.500 8.200 11L6.500 11.600L11.500 15.800L14.200 10L12.200 10.800C11 9 11.300 6.500 12.500 4.500Z" fill="#1c3f7c"/></g><g transform="translate(69,59.5)"><rect x=".6" y="1" width="13.600" height="13.600" rx="1" fill="#4a78d8" stroke="#2a4fb0" stroke-width=".8"/><rect x="2.600" y="1.400" width="9.600" height="7" fill="#eef4fa"/><path d="M4 3.500h6.800M4 5.500h6.800" stroke="#9ab" stroke-width=".8"/><rect x="3.600" y="10.200" width="7.600" height="4.400" fill="#d4dcec"/><rect x="5" y="11" width="2.200" height="3.400" fill="#2a4fb0"/></g><g transform="translate(98,59.5)"><path d="M4 1H10.5L12 7H5.5Z" fill="#fff" stroke="#8090b8" stroke-width=".7"/><path d="M1 8.5L5 6L14 7.5L15.2 10.5L11 14L1.5 12Z" fill="#c8d0e8" stroke="#5a6a9c" stroke-width=".8"/><path d="M1.2 9L10.8 11L15 8" fill="none" stroke="#5a6a9c" stroke-width=".7"/><path d="M6.5 12.5L10 14.3L13 12" fill="#fff" stroke="#8090b8" stroke-width=".6"/></g><g transform="translate(120.5,59)"><path d="M.6 .6H11L14.6 4V12.6H.6Z" fill="url(#g4)" stroke="#3a6ab8" stroke-width="1"/><circle cx="10" cy="8.5" r="3.6" fill="#d8e8f8" stroke="#7a8aa0" stroke-width="1.2"/><path d="M7.5 11.2L3.5 15.5" stroke="#b86a28" stroke-width="2"/></g><g transform="translate(143,59)"><circle cx="11" cy="5" r="4.6" fill="#48a8d8" stroke="#2a6aa0" stroke-width=".6"/><path d="M8 3c2 1 4-1 6 1M8 7c2-1 5 1 7-1" stroke="#7ad070" stroke-width="1.2" fill="none"/><path d="M1 10.5L5 8.5L12 10L13.5 12.5L9.5 15.5L1.5 13.5Z" fill="#c8d0e8" stroke="#5a6a9c" stroke-width=".8"/><path d="M1.5 3L7.5 2L8.5 7.5L3 8.8Z" fill="#f0c820" stroke="#a88a10" stroke-width=".6"/><path d="M5 13L9 14.5L11.5 12.5" fill="#fff" stroke="#8090b8" stroke-width=".5"/></g><g transform="translate(166,59)"><path d="M1 5L6 3L9 12L5 15L1 13Z" fill="#e8ecf4" stroke="#a8b4c8" stroke-width=".6"/><circle cx="10.5" cy="6" r="5.2" fill="#38a0d0" stroke="#2a6aa0" stroke-width=".6"/><path d="M6 4c3 2 6 2 9 0M6 8c3-2 6-2 9 0" stroke="#e8c020" stroke-width="1.1" fill="none"/><path d="M9 1c-2 3-2 7 1 10M12.5 1.3c2 3 1 7-1.5 9.7" stroke="#e04040" stroke-width="1.1" fill="none"/></g><g transform="translate(195,60)"><path d="M.8 4.200L11 8.600M.8 8.800L11 5.800" stroke="#1c2f5c" stroke-width="1.100"/><path d="M1 4.200L8 6.800L1 5.400zM1 8.800L8 7.200L1 7.800z" fill="#dfe4f4" stroke="#1c2f5c" stroke-width=".4"/><circle cx="13.200" cy="4.600" r="2" fill="none" stroke="#1c2f5c" stroke-width="1.200"/><circle cx="13.200" cy="10" r="2" fill="none" stroke="#1c2f5c" stroke-width="1.200"/></g><g transform="translate(218,59)"><path d="M.6 1.6H9L11.6 4V11.6H.6Z" fill="url(#g1)" stroke="#3a6ab8" stroke-width="1.1"/><path d="M3.6 4.6H12L15.6 8V14.6H3.6Z" fill="url(#g1)" stroke="#3a6ab8" stroke-width="1.1"/></g><g transform="translate(241,59)"><path d="M3 2.5L8 .5L15 7.5L14 12.5L8 15.5L1 9Z" fill="#e8c468" stroke="#a8822a" stroke-width=".8"/><path d="M4.5 1.2L7 .2L9 1.5L6.5 3.2Z" fill="#f4f4f4" stroke="#888" stroke-width=".5"/><path d="M3.6 4.6H10L12.6 7V12.6H3.6Z" fill="url(#g4)" stroke="#3a6ab8" stroke-width="1"/></g><g transform="translate(266,59.5)"><path d="M7.5 8.5L11.5 3L13.5 4.5L9.5 10Z" fill="#d89a68" stroke="#8a5a38" stroke-width=".5"/><path d="M7.5 8.5L9.5 10L7.5 11.8L2 13.5L.8 13.2L5 11Z" fill="#181818"/><path d="M8.2 7.6l2 1.5" stroke="#9ab" stroke-width="1"/></g><g transform="translate(287.5,59)"><path d="M8 .8l6.5 .2l-3 4.2l3 .3l-7.5 8l2-5.8l-2.8-.2z" fill="#f4d020" stroke="#a88a10" stroke-width=".6"/><rect x="1.8" y="7.8" width="7" height="6.4" fill="#f0a070" stroke="#2a5ab0" stroke-width="1.1"/><rect x=".4" y="13" width="2.6" height="2.6" fill="#1b7fe3"/></g><g transform="translate(316,59.5)"><path d="M13.5 5.5C13.5 1 7 .5 5.5 6.5L5 9.2" fill="none" stroke="#1c3f7c" stroke-width="2.6"/><path d="M.5 8.2L10 9.5L4.8 15.6Z" fill="#1c3f7c"/></g><g transform="translate(352,59.5)"><path d="M2.5 4.5C4 .5 11 1 11 7L11.2 9.2" fill="none" stroke="#b8bcc8" stroke-width="2.6"/><path d="M15.6 8.2L6.5 9.5L11.4 15.6Z" fill="#b8bcc8"/><path d="M3 5.5C4.5 2 10 2.5 10 7.5" fill="none" stroke="#fff" stroke-width=".8" opacity=".8"/></g><g transform="translate(394,59)"><path d="M1 3L3.5 2.2L5 4L6 3L8 4.5L9.5 4.5L11.5 8L10.5 11L8 12.5L4.5 9.5Z" fill="#c89098" stroke="#8a5860" stroke-width=".7"/><path d="M8.2 12.2L11.5 9L15.5 13.5V15.8H10Z" fill="#2a5a9c"/><path d="M9.5 11.5l2-2" stroke="#fff" stroke-width=".8"/><path d="M12.8 .3v7M9.3 3.8h7" stroke="#2a5a9c" stroke-width="1.2"/><path d="M12.8 -.2l1.5 1.7h-3zM12.8 7.8l1.5-1.7h-3zM8.8 3.8l1.7-1.5v3zM16.6 3.8l-1.7-1.5v3z" fill="#2a5a9c"/></g><g transform="translate(417,59.5)"><circle cx="6" cy="6" r="4.6" fill="url(#g1)" stroke="#808890" stroke-width="1.5"/><path d="M9.5 9.5L14.5 14.5" stroke="#b86a28" stroke-width="2.2"/><path d="M11.5 3h4.5M13.75 .8v4.4M11.5 7.3h4.5" stroke="#1c3f7c" stroke-width="1.2"/></g><g transform="translate(440,59.5)"><circle cx="6" cy="6" r="4.6" fill="url(#g1)" stroke="#808890" stroke-width="1.5"/><path d="M9.5 9.5L14.5 14.5" stroke="#b86a28" stroke-width="2.2"/><rect x="3.8" y="3.8" width="4.6" height="4.6" fill="none" stroke="#1c3f9c" stroke-width="1.2"/><path d="M3 3h4.5" stroke="#1c3f9c" stroke-width="1.2"/><path d="M16 11.5V16H11.5z" fill="#000"/></g><g transform="translate(462.5,59.5)"><circle cx="6.5" cy="6" r="4.6" fill="url(#g1)" stroke="#808890" stroke-width="1.5"/><path d="M9.5 9.5L14.5 14.5" stroke="#b86a28" stroke-width="2.2"/><path d="M14.5 6C15.5 1.5 10 .5 7.5 3.2" fill="none" stroke="#1c3f8c" stroke-width="2"/><path d="M3.5 3.2h5.2v5.2z" fill="#1c3f8c"/></g><g transform="translate(492,59)"><rect x=".8" y=".3" width="13.5" height="3.6" fill="url(#rb)"/><path d="M4 7.5L10 4.5L14.5 4.8L15 9.5L11 10L8.5 8.5L4.5 9.2Z" fill="#f0b8b0" stroke="#9a6a68" stroke-width=".6"/><rect x="14" y="3.5" width="2" height="6" fill="#2a5a9c"/><rect x="1" y="6.5" width="4.5" height="3" fill="#e8d848" stroke="#6a86b8" stroke-width=".7"/><path d="M1.5 11.5c1 1.4 3 1.4 4 0M1.5 14c1 1.4 3 1.4 4 0" stroke="#4a76b4" stroke-width="1.1" fill="none"/><text x="8.6" y="16" font-family="Liberation Sans, sans-serif" font-size="10.5" font-weight="normal" fill="#222">A</text></g><g transform="translate(515,59)"><rect x=".6" y=".6" width="15" height="15" fill="#e0e8f4" stroke="#1c3f9c" stroke-width="1.2"/><rect x=".6" y=".6" width="3.4" height="15" fill="#2a5ac0"/><g fill="#f4e040"><circle cx="2.3" cy="3" r=".9"/><circle cx="2.3" cy="6" r=".9"/><circle cx="2.3" cy="9" r=".9"/><circle cx="2.3" cy="12" r=".9"/></g><g fill="#a8c8b0" stroke="#1c3f7c" stroke-width=".7"><rect x="6" y="2.5" width="2.6" height="2.6"/><rect x="10.6" y="2.5" width="2.6" height="2.6"/><rect x="6" y="6.6" width="2.6" height="2.6"/><rect x="10.6" y="6.6" width="2.6" height="2.6"/></g><rect x="9.6" y="10.6" width="3.4" height="3.4" fill="#f4e040" stroke="#1c3f7c" stroke-width=".7"/></g><g transform="translate(538,59)"><path d="M.6 .6H7L9 3V15.4H.6Z" fill="#e0e8f4" stroke="#1c3f9c" stroke-width="1.2"/><g fill="#a8c8b0" stroke="#1c3f7c" stroke-width=".7"><rect x="3.4" y="2.6" width="2.6" height="2.6"/><rect x="3.4" y="6.6" width="2.6" height="2.6"/><rect x="3.4" y="10.6" width="2.6" height="2.6"/></g><path d="M8 2.5C12 2 14 4.5 13.8 8" fill="none" stroke="#1c3f7c" stroke-width="1.6"/><path d="M11 7.5h5.4l-2.7 3z" fill="#1c3f7c"/><rect x="12.2" y="11" width="3.2" height="3.2" fill="#f4e040" stroke="#1c3f7c" stroke-width=".8"/><rect x="9.3" y="6.5" width="1.6" height="5" fill="#2a5ac0"/></g><g transform="translate(561,59)"><rect x=".5" y="1.5" width="15.5" height="14" fill="#5a8cc0"/><path d="M.5 11L16 7V15.5H.5Z" fill="#b8d0e0"/><path d="M.5 2.5C4 2 9 4 11.5 7C12.5 9 11 11 9 10.5L.5 8Z" fill="#e8ecf0" stroke="#a0a8b0" stroke-width=".5"/><ellipse cx="11.8" cy="8.3" rx="2.2" ry="2.8" fill="#d0d4d8" stroke="#888" stroke-width=".6"/><ellipse cx="12" cy="8.4" rx="1" ry="1.4" fill="#889"/><path d="M.5 8.5L7 14L2 15.5H.5Z" fill="#f4f4f4"/></g><g transform="translate(584,59.5)"><path d="M3.5 4H15.5V15.5H3.5Z" fill="#e8e8f0" stroke="#667" stroke-width=".6"/><path d="M2 2.6H14V14H2Z" fill="#d4dcec" stroke="#667" stroke-width=".6"/><path d="M.6 1.2H12.6V12.6H.6Z" fill="#c0d0ec" stroke="#667" stroke-width=".6"/><path d="M3 1C4 -.5 6 -.2 6.5 1C8 -.3 10.5 .5 10 2.5C12 3 12 6 10 6.5C11 8.5 8.5 10 7 8.5C6 10 3.5 9.5 3.5 7.5C1 7.5 .5 4.5 2.5 4C1.5 2.8 2 1.5 3 1Z" fill="#f4f4f8" stroke="#e02020" stroke-width="1.6"/></g><g transform="translate(609,59)"><rect x=".4" y=".5" width="11.6" height="15.2" fill="#111"/><rect x="1.6" y="1.6" width="9.2" height="3.2" fill="#4a9a4a" stroke="#8c8" stroke-width=".4"/><g fill="#e02020"><rect x="1.8" y="6.6" width="2" height="2"/><rect x="5.2" y="6.6" width="2" height="2"/><rect x="8.6" y="6.6" width="2" height="2"/></g><g fill="#fff"><rect x="1.8" y="9.8" width="2" height="2"/><rect x="5.2" y="9.8" width="2" height="2"/><rect x="8.6" y="9.8" width="2" height="2"/><rect x="1.8" y="12.8" width="2" height="2"/><rect x="5.2" y="12.8" width="2" height="2"/><rect x="8.6" y="12.8" width="2" height="2"/></g></g><g transform="translate(637,59.5)"><rect x=".5" y="1" width="14.6" height="13.8" rx="2.2" fill="url(#g3)" stroke="#1c4f9c" stroke-width=".5"/><text x="3.6" y="13.6" font-family="Liberation Sans, sans-serif" font-size="15" font-weight="bold" fill="#fff">?</text></g><g transform="translate(678,59.5)"><text x="0.2" y="13.2" font-family="Liberation Sans, sans-serif" font-size="17" font-weight="normal" fill="#111">A</text><path d="M9.5 9.2l4.5 -5.5l1.6 1.2l-4.2 5.8z" fill="#c8824a" stroke="#7a4a28" stroke-width=".5"/><path d="M9.5 9.2l-2.2 -1.2l-3.5 3l-2.5 1.5l5 .2z" fill="#222"/></g><g transform="translate(806.5,59)"><path d="M.8 9.5V15.6M16 9.5V15.6" stroke="#000" stroke-width="1.3"/><path d="M1 12.6H15.8" stroke="#000" stroke-width="1.3"/><path d="M1 12.6l3 -1.8v3.6zM15.8 12.6l-3 -1.8v3.6z" fill="#000"/><path d="M9.5 8.2l4.5 -5.5l1.6 1.2l-4.2 5.8z" fill="#c8824a" stroke="#7a4a28" stroke-width=".5"/><path d="M9.5 8.2l-2.2 -1.2l-3.5 3l-2.5 1.5l5 .2z" fill="#222"/></g><g transform="translate(935.5,59)"><rect x=".6" y="3.6" width="12.8" height="11.8" fill="#e8eef8" stroke="#3a5aa8" stroke-width="1"/><rect x=".6" y="3.6" width="12.8" height="3" fill="#3a5ac0"/><path d="M.6 10.5H13.4M5 6.6V15.4M9.2 6.6V15.4" stroke="#6a8ac8" stroke-width="1"/><path d="M9.3 7.4l4.5 -5.5l1.6 1.2l-4.2 5.8z" fill="#c8824a" stroke="#7a4a28" stroke-width=".5"/><path d="M9.3 7.4l-2.2 -1.2l-3.5 3l-2.5 1.5l5 .2z" fill="#222"/></g><path d="M340 64.500h6l-3 3.500z" fill="#1c3f7c"/><path d="M376.500 64.500h6l-3 3.500z" fill="#b8bcc8"/><g transform="translate(197,87)"><rect x="0" y="0" width="16" height="16" fill="#4a78b0"/><path d="M0 0h4v4h-4zM12 0h4v4h-4zM0 12h4v4h-4zM12 12h4v4h-4z" fill="#8ab0d8"/><path d="M8 1.2l1.2 1.8l2-.8l.2 2.2l2.2.2l-.8 2l1.8 1.2l-1.8 1.2l.8 2l-2.2.2l-.2 2.2l-2-.8L8 14.800l-1.200-1.800l-2 .8l-.2-2.2l-2.2-.2l.8-2L1.200 8l1.800-1.200l-.8-2l2.200-.2l.2-2.200l2 .8z" fill="#d8d8d8" stroke="#333" stroke-width="1.2"/><circle cx="8" cy="8" r="2.6" fill="#4a78b0" stroke="#333" stroke-width="1.2"/></g><g transform="translate(220.5,87)"><rect x=".5" y=".5" width="15" height="15" fill="#e8e8e0" stroke="#555" stroke-width="1" stroke-dasharray="1.5 1.2"/><path d="M1.500 8L8 2.500L14.500 8V14.500H1.500Z" fill="#111"/><path d="M10.5 2v3" stroke="#111" stroke-width="1.6"/></g><g transform="translate(261,87)"><path d="M1 10.5L8 7.5L15 10.5L8 13.5Z" fill="#f4f6fa" stroke="#6a86a8" stroke-width=".7"/><path d="M1 7.5L8 4.5L15 7.5L8 10.5Z" fill="#dfe9f5" stroke="#6a86a8" stroke-width=".7"/><path d="M1 4.5L8 1.5L15 4.5L8 7.5Z" fill="#b9cde6" stroke="#6a86a8" stroke-width=".7"/></g><g transform="translate(583.5,87)"><g transform="translate(2,-1)"><path d="M1 10.5L8 7.5L15 10.5L8 13.5Z" fill="#f0d020" stroke="#6a86a8" stroke-width=".7"/><path d="M1 7.5L8 4.5L15 7.5L8 10.5Z" fill="#dfe9f5" stroke="#6a86a8" stroke-width=".7"/><path d="M1 4.5L8 1.5L15 4.5L8 7.5Z" fill="#b9cde6" stroke="#6a86a8" stroke-width=".7"/></g><path d="M.5 15.5L5 11" stroke="#1c3f7c" stroke-width="1.4"/><path d="M2.500 10.500h3.500v3.500z" fill="#1c3f7c"/></g><g transform="translate(607,86.5)"><g transform="translate(0,1.5)"><path d="M1 10.5L8 7.5L15 10.5L8 13.5Z" fill="#f4f6fa" stroke="#6a86a8" stroke-width=".7"/><path d="M1 7.5L8 4.5L15 7.5L8 10.5Z" fill="#dfe9f5" stroke="#6a86a8" stroke-width=".7"/><path d="M1 4.5L8 1.5L15 4.5L8 7.5Z" fill="#b9cde6" stroke="#6a86a8" stroke-width=".7"/></g><path d="M12.500 7.500C13.500 2.500 8 1 6 4.500" fill="none" stroke="#1c3f8c" stroke-width="2"/><path d="M3.500 3.500l1 5.500l4.500-3z" fill="#1c3f8c"/></g><g transform="translate(288,87)"><path d="M4.500 0C1.500 0 0 2.500 .8 5C1.500 7 2.500 7.500 2.800 9.500H6.200C6.500 7.500 7.500 7 8.200 5C9 2.500 7.500 0 4.500 0Z" fill="#f8f0a0" stroke="#b8a020" stroke-width=".8"/><path d="M2.800 10.500h3.400v3l-1 .8h-1.400l-1-.8z" fill="#a8b0c0" stroke="#556" stroke-width=".6"/></g><g transform="translate(301.5,88)"><rect x="0" y="0" width="14" height="14" fill="#2a6ad0"/><circle cx="7" cy="7" r="6.600" fill="#f4e040" stroke="#b89a10" stroke-width=".6"/></g><g transform="translate(318,88)"><circle cx="5.500" cy="5.500" r="5.300" fill="#8ab0e0" stroke="#4a78b8" stroke-width=".6" stroke-dasharray="1.500 .8"/><circle cx="5.500" cy="5.500" r="2.600" fill="#f0e8a0" stroke="#7a98c8" stroke-width=".8"/><rect x="6.500" y="6.500" width="7" height="7" fill="#fff" stroke="#3a5a98" stroke-width=".9"/></g><g transform="translate(336,87)"><path d="M1.500 7V3.500C1.500 -.300 7.500 -.300 7.500 3.500V5" fill="none" stroke="#c8a810" stroke-width="1.800"/><rect x="5.500" y="5.500" width="8" height="8" fill="#e8d040" stroke="#8a7a10" stroke-width=".8"/><path d="M7 8h5M7 10h5M7 12h5" stroke="#8a7a10" stroke-width=".7"/></g><g transform="translate(8,10)"><rect x="0" y="0" width="16" height="16" fill="#fff"/><rect x="1" y="1" width="14" height="14" fill="#2aa898"/><path d="M1 10.200H15M9.800 1V15" stroke="#fff" stroke-width="1.200"/><path d="M2 9.500L5 2.500L8.500 9.500" fill="#d8f4f0" stroke="#0c3c34" stroke-width="1.200"/><rect x="8" y="8.300" width="3.800" height="3.800" fill="#fff" stroke="#0c5c50" stroke-width="1.100"/><path d="M2 13l4-2M11.500 2.500v4" stroke="#0c3c34" stroke-width="1"/></g><g transform="translate(10.5,33)"><path d="M1.500 0H9.500L15 5V16H1.500Z" fill="#fff"/><path d="M2 .5H9L14.500 5.500V13H2Z" fill="#3a6aa0"/><path d="M9 .5V5.500H14.500Z" fill="#c8d8ec"/><path d="M2 .5h3v3h-3zM6 .5h3v2h-3z" fill="#1c3f7c"/><circle cx="5.200" cy="3.800" r="1.400" fill="#fff"/><path d="M1 7.500H5.500L15 13.500V16H1Z" fill="#f0c810" stroke="#c89a08" stroke-width=".6"/><path d="M2 8.500H5L13 13.500" fill="none" stroke="#fff088" stroke-width="1"/></g><g transform="translate(369,745)"><rect x="0" y="0" width="16" height="16" fill="#fff"/><rect x="1" y="1" width="14" height="14" fill="#2aa898"/><path d="M1 10.200H15M9.800 1V15" stroke="#fff" stroke-width="1.200"/><path d="M2 9.500L5 2.500L8.500 9.500" fill="#d8f4f0" stroke="#0c3c34" stroke-width="1.200"/><rect x="8" y="8.300" width="3.800" height="3.800" fill="#fff" stroke="#0c5c50" stroke-width="1.100"/><path d="M2 13l4-2M11.500 2.500v4" stroke="#0c3c34" stroke-width="1"/></g><g transform="translate(11,743.5)"><path d="M1.500 2.500C4 .500 6.500 1.500 9 2.800L7.800 8.800C5.500 7.500 3 6.800 .5 8.500Z" fill="#e8502a"/><path d="M10.300 3.200C12.500 4.300 15 4.800 18 2.800L16.800 8.800C14 10.500 11.500 10 9.100 9.200Z" fill="#7cc040"/><path d="M.2 10C2.800 8.200 5.300 9 7.500 10.200L6.300 16.200C4 15 1.500 14.300 -1 16Z" fill="#3a80e8"/><path d="M8.800 10.600C11.200 11.400 13.800 11.900 16.500 10.200L15.300 16.200C12.500 17.900 10 17.400 7.600 16.600Z" fill="#f8c820"/></g><g transform="translate(109,744)"><circle cx="8" cy="8.500" r="5.800" fill="none" stroke="#48b0f0" stroke-width="3.200"/><path d="M3 8.800h10.500" stroke="#48b0f0" stroke-width="2.400"/><path d="M9 13.800h5v-3" fill="#2a68d8" stroke="#2a68d8" stroke-width="1"/><ellipse cx="8" cy="8" rx="9" ry="3.200" transform="rotate(-30 8 8)" fill="none" stroke="#a8d8f8" stroke-width=".8"/></g><g transform="translate(134.5,744)"><path d="M2 1.500L10 .5L11 9L3.500 10.500Z" fill="#a8d0f8" stroke="#e8f0fc" stroke-width="1.200"/><path d="M4.500 10.500L8.500 9.800L9.500 13.500L5 14.500Z" fill="#d8d8e0"/><path d="M3 14L11 13L11.500 15L3.500 16Z" fill="#f0f0f4"/></g><g transform="translate(155.5,744.5)"><rect x=".5" y=".5" width="14.500" height="14.500" fill="#e8f0fc" stroke="#9ab8e8" stroke-width="1"/><rect x="2" y="3" width="11.500" height="10" fill="#3a68c8"/><text x="2.6" y="12" font-family="Liberation Sans, sans-serif" font-size="10.5" font-weight="bold" fill="#fff" font-style="italic">W</text></g><g transform="translate(207.5,744.5)"><path d="M4 .5H13L16 3.500V15.500H4Z" fill="#fff" stroke="#777" stroke-width=".7"/><circle cx="6.500" cy="8.500" r="4.200" fill="none" stroke="#2a78e0" stroke-width="2.400"/><path d="M3 8.800h7.500" stroke="#2a78e0" stroke-width="1.800"/><ellipse cx="6.500" cy="8" rx="7" ry="2.400" transform="rotate(-30 6.500 8)" fill="none" stroke="#f0c850" stroke-width=".7"/></g><g transform="translate(528,745)"><path d="M2.500 .5H12L15.500 4V15.500H2.500Z" fill="#fff" stroke="#667" stroke-width=".8"/><path d="M5 6h8M5 8h8M5 10h8M5 12h8" stroke="#99a" stroke-width=".7"/><rect x="0" y="2.500" width="9.500" height="8.500" fill="#2a58c0" stroke="#fff" stroke-width=".6"/><text x="0.8" y="10" font-family="Liberation Sans, sans-serif" font-size="8" font-weight="bold" fill="#fff">W</text></g><g transform="translate(877,746)"><rect x=".5" y="4.500" width="15" height="8.500" rx="1" fill="#e8e8e8" stroke="#222" stroke-width="1"/><path d="M2.500 6.800h11M2.500 8.800h11" stroke="#222" stroke-width="1.100" stroke-dasharray="1.200 .8"/><path d="M4 11h8" stroke="#222" stroke-width="1.100"/><path d="M8 4.500C8 2.500 10 3.500 10.500 1.500" fill="none" stroke="#222" stroke-width=".8"/></g><g transform="translate(903.5,745)"><circle cx="8" cy="8" r="8" fill="#2a78e8" stroke="#9cc8ff" stroke-width="1"/><circle cx="8" cy="8" r="6" fill="#3a8af4"/><path d="M9.500 4.500L6 8L9.500 11.500" fill="none" stroke="#fff" stroke-width="2"/></g><g transform="translate(923,744)"><ellipse cx="8" cy="5" rx="4.200" ry="4.500" fill="#111"/><ellipse cx="8" cy="11" rx="5.500" ry="4.800" fill="#111"/><ellipse cx="8" cy="11.500" rx="3.400" ry="3.600" fill="#fff"/><path d="M3 8.500C5.500 10.500 10.500 10.500 13 8.500L12.500 10.500C10 12 6 12 3.500 10.500Z" fill="#e02020"/><ellipse cx="6.500" cy="4" rx="1" ry="1.400" fill="#fff"/><ellipse cx="9.500" cy="4" rx="1" ry="1.400" fill="#fff"/><ellipse cx="8" cy="6.800" rx="2.400" ry="1" fill="#f0b020"/><ellipse cx="5" cy="15.500" rx="2.600" ry="1" fill="#f0b020"/><ellipse cx="11" cy="15.500" rx="2.600" ry="1" fill="#f0b020"/></g><g transform="translate(958,745)"><rect x="5.500" y=".5" width="9" height="7" fill="#3a58a8" stroke="#c8d4f0" stroke-width="1"/><rect x=".5" y="5.500" width="9" height="7" fill="#5a78c8" stroke="#c8d4f0" stroke-width="1"/><path d="M3 14.500h5M10 9.500h4" stroke="#c8d4f0" stroke-width="1.400"/></g><g transform="translate(922.5,716.5)"><path d="M2 2C3 7 7 10 12 10.500L10 13H4L3 11Z" fill="#c8ccd8" stroke="#556" stroke-width=".8"/><path d="M7 6L11 1.500" stroke="#556" stroke-width="1"/><circle cx="11.300" cy="1.500" r="1.200" fill="#889"/><path d="M8 15.500L12 8.500L16 15.500Z" fill="#f8d820" stroke="#6a5a00" stroke-width=".7"/><path d="M12 11v2.500M12 14.200v.8" stroke="#000" stroke-width="1"/></g><g transform="translate(944,716.5)"><path d="M7.500 7V4.500C7.500 .8 13.500 .8 13.500 4.500V6" fill="none" stroke="#d8a810" stroke-width="1.800"/><rect x="1" y="6.500" width="9.500" height="8" rx="1.500" fill="#e8c820" stroke="#7a6a00" stroke-width=".8"/><path d="M1.500 8.500h8.500M1.500 10.500h8.500M1.500 12.500h8.500" stroke="#7a6a00" stroke-width=".8"/><path d="M3.500 7v7" stroke="#fff8a0" stroke-width="1.400"/></g><path d="M969 726.500h7.500l-3.750 4z" fill="#000"/><rect x="985.500" y="715.500" width="15.500" height="15" fill="#fff" stroke="#3a5a98" stroke-width="1"/><rect x="987.500" y="717.500" width="11.500" height="11" fill="url(#g4)" stroke="#5a7ab8" stroke-width="1"/><g fill="#c0bca8"><rect x="1014" y="722" width="2" height="2"/><rect x="1010" y="726" width="2" height="2"/><rect x="1014" y="726" width="2" height="2"/><rect x="1006" y="730" width="2" height="2"/><rect x="1010" y="730" width="2" height="2"/><rect x="1014" y="730" width="2" height="2"/></g></svg></body></html>
